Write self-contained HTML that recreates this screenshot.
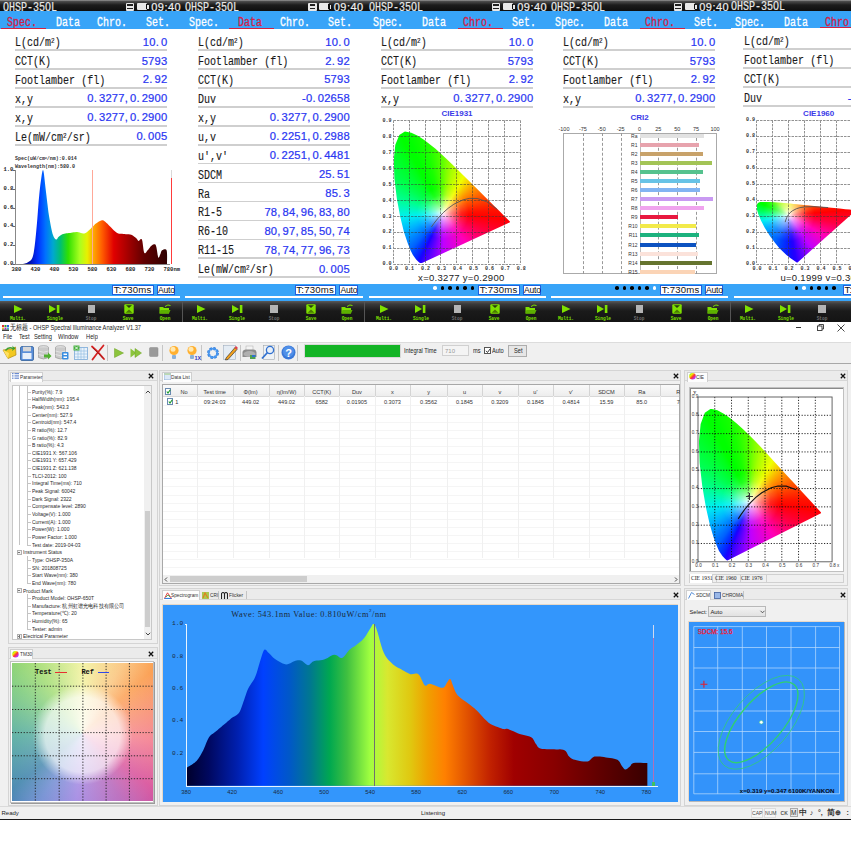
<!DOCTYPE html><html><head><meta charset="utf-8"><style>
*{margin:0;padding:0}
html,body{width:851px;height:851px;overflow:hidden;background:#fff;position:relative}
body>div,body>svg,.a,.t,.lab,.val,.c,.r{position:absolute}
body>div{box-sizing:border-box}
.t{white-space:nowrap;line-height:0}
.c{text-align:center;white-space:nowrap;line-height:0}
.r{text-align:right;white-space:nowrap;line-height:0}
.lab{white-space:nowrap;line-height:0;color:#1a1a1a;font:12px/0 "Liberation Mono",monospace;transform:scaleX(0.835);transform-origin:0 0;letter-spacing:0px;-webkit-text-stroke:0.12px #1a1a1a}
.val{white-space:nowrap;line-height:0;text-align:right;color:#2a36f2;font:11.2px/0 "Liberation Sans",sans-serif;letter-spacing:0.2px;-webkit-text-stroke:0.22px #2a36f2}
.val i{display:inline-block;width:2px}
sup{font-size:60%;vertical-align:baseline;position:relative;top:-0.45em;line-height:0}
</style></head><body><svg width="0" height="0" style="position:absolute"><defs><radialGradient id="wheelw"><stop offset="0" stop-color="#fff"/><stop offset="1" stop-color="#fff" stop-opacity="0"/></radialGradient><linearGradient id="wheel" x1="0" y1="0" x2="1" y2="1"><stop offset="0" stop-color="#30e030"/><stop offset="0.3" stop-color="#f0f000"/><stop offset="0.55" stop-color="#ff3030"/><stop offset="0.8" stop-color="#c030ff"/><stop offset="1" stop-color="#3050ff"/></linearGradient></defs></svg>
<div style="left:0.00px;top:0.00px;width:183.00px;height:11.30px;background:linear-gradient(#9a9a9a 0px,#4a4a4a 1.5px,#1c1c1c 5px,#0e0e0e 11px);"></div>
<div class="t" style="left:2.90px;top:7.60px;color:#e8e8e8;font:12px/0 'Liberation Mono',monospace;transform:scaleX(0.835);transform-origin:0 0;-webkit-text-stroke:0.2px #e8e8e8;">OHSP-35OL</div>
<div style="left:125.50px;top:2.50px;width:8.50px;height:8.50px;background:#e8e8e8;border-radius:1px;"></div>
<div style="left:127.00px;top:4.00px;width:5.50px;height:2.00px;background:#222;"></div>
<div style="left:127.00px;top:8.00px;width:5.50px;height:1.20px;background:#222;"></div>
<div style="left:136.80px;top:3.00px;width:10.20px;height:7.20px;background:#e8e8e8;border-radius:1px;"></div>
<div style="left:145.50px;top:4.20px;width:1.50px;height:4.80px;background:#0a0a0a;"></div>
<div style="left:147.00px;top:4.50px;width:1.50px;height:4.20px;background:#e8e8e8;"></div>
<div class="t" style="left:151.20px;top:6.60px;color:#f0f0f0;font:11px/0 'Liberation Sans',sans-serif;letter-spacing:0.5px;-webkit-text-stroke:0.2px #f0f0f0;">09:40</div>
<div style="left:0.00px;top:11.30px;width:183.00px;height:17.80px;background:#38a4f8;"></div>
<div class="c" style="left:-3.50px;top:23.30px;width:50px;color:#d42045;font:12px/0 'Liberation Mono',monospace;transform:scaleX(0.83);-webkit-text-stroke:0.3px #d42045;">Spec.</div>
<div class="c" style="left:42.90px;top:23.30px;width:50px;color:#ffffff;font:12px/0 'Liberation Mono',monospace;transform:scaleX(0.83);-webkit-text-stroke:0.3px #ffffff;">Data</div>
<div class="c" style="left:87.20px;top:23.30px;width:50px;color:#ffffff;font:12px/0 'Liberation Mono',monospace;transform:scaleX(0.83);-webkit-text-stroke:0.3px #ffffff;">Chro.</div>
<div class="c" style="left:132.80px;top:23.30px;width:50px;color:#ffffff;font:12px/0 'Liberation Mono',monospace;transform:scaleX(0.83);-webkit-text-stroke:0.3px #ffffff;">Set.</div>
<div style="left:0.50px;top:27.50px;width:45.50px;height:2.00px;background:#d42040;"></div>
<div style="left:0.00px;top:29.10px;width:183.00px;height:254.90px;background:#ffffff;"></div>
<div class="lab" style="left:15.30px;top:43.10px;">L(cd/m<sup>2</sup>)</div>
<div class="val" style="left:67.40px;top:41.60px;width:100px;">10.<i></i>0</div>
<div style="left:15.00px;top:49.20px;width:152.00px;height:1.70px;background:#cfcfcf;"></div>
<div class="lab" style="left:15.30px;top:62.03px;">CCT(K)</div>
<div class="val" style="left:67.40px;top:60.53px;width:100px;">5793</div>
<div style="left:15.00px;top:68.13px;width:152.00px;height:1.70px;background:#cfcfcf;"></div>
<div class="lab" style="left:15.30px;top:80.96px;">Footlamber (fl)</div>
<div class="val" style="left:67.40px;top:79.46px;width:100px;">2.<i></i>92</div>
<div style="left:15.00px;top:87.06px;width:152.00px;height:1.70px;background:#cfcfcf;"></div>
<div class="lab" style="left:15.30px;top:99.89px;">x,y</div>
<div class="val" style="left:67.40px;top:98.39px;width:100px;">0.<i></i>3277,<i></i>0.<i></i>2900</div>
<div style="left:15.00px;top:105.99px;width:152.00px;height:1.70px;background:#cfcfcf;"></div>
<div class="lab" style="left:15.30px;top:118.82px;">x,y</div>
<div class="val" style="left:67.40px;top:117.32px;width:100px;">0.<i></i>3277,<i></i>0.<i></i>2900</div>
<div style="left:15.00px;top:124.92px;width:152.00px;height:1.70px;background:#cfcfcf;"></div>
<div class="lab" style="left:15.30px;top:137.75px;">Le(mW/cm<sup>2</sup>/sr)</div>
<div class="val" style="left:67.40px;top:136.25px;width:100px;">0.<i></i>005</div>
<div style="left:15.00px;top:143.85px;width:152.00px;height:1.70px;background:#cfcfcf;"></div>
<div style="left:0.00px;top:284.00px;width:183.00px;height:17.00px;background:#38a4f8;"></div>
<div style="left:2.90px;top:296.20px;width:177.50px;height:2.00px;background:#ffffff;"></div>
<div style="left:0.00px;top:301.00px;width:183.00px;height:21.30px;background:linear-gradient(#5a5a5a 0px,#3a3a3a 3px,#1a1a1a 10px,#141414 21px);"></div>
<div style="left:181.80px;top:301.00px;width:1.20px;height:21.30px;background:#555;"></div>
<div class="t" style="left:15.00px;top:159.20px;font:bold 5px/0 'Liberation Mono',monospace;color:#333;">Spec(uW/cm<sup>2</sup>/nm):0.014</div>
<div class="t" style="left:15.00px;top:166.60px;font:bold 5px/0 'Liberation Mono',monospace;color:#333;">Wavelength(nm):580.0</div>
<div style="left:14.50px;top:170.00px;width:1.00px;height:95.00px;background:#888;"></div>
<div style="left:14.50px;top:264.00px;width:155.00px;height:1.00px;background:#888;"></div>
<svg class="a" style="left:15.30px;top:170.00px;overflow:visible" width="152.00" height="94.00"><defs><linearGradient id="g43" x1="0" y1="0" x2="152.00" y2="0" gradientUnits="userSpaceOnUse"><stop offset="0.0000" stop-color="#000060"/><stop offset="0.1000" stop-color="#0010b0"/><stop offset="0.1500" stop-color="#0030ff"/><stop offset="0.2000" stop-color="#0070ff"/><stop offset="0.2500" stop-color="#00a8d0"/><stop offset="0.3000" stop-color="#00c070"/><stop offset="0.3500" stop-color="#30e000"/><stop offset="0.4250" stop-color="#a8ff20"/><stop offset="0.4750" stop-color="#e8f000"/><stop offset="0.5250" stop-color="#ff9c00"/><stop offset="0.5750" stop-color="#ff5a00"/><stop offset="0.6500" stop-color="#e00000"/><stop offset="0.7500" stop-color="#a00000"/><stop offset="0.8500" stop-color="#600000"/><stop offset="1.0000" stop-color="#300000"/></linearGradient></defs><path d="M0 94.00 L0.00 94.00 L0.90 94.00 L2.17 94.00 L3.66 94.00 L5.22 94.00 L6.71 94.00 L7.98 94.00 L9.03 93.83 L9.99 93.62 L10.88 93.35 L11.71 93.03 L12.51 92.62 L13.30 92.12 L14.08 91.59 L14.85 91.04 L15.58 90.42 L16.27 89.65 L16.91 88.67 L17.48 87.42 L17.97 85.94 L18.38 84.30 L18.74 82.46 L19.07 80.35 L19.40 77.95 L19.76 75.20 L20.14 72.00 L20.53 68.36 L20.92 64.42 L21.31 60.32 L21.68 56.19 L22.04 52.17 L22.38 48.15 L22.70 43.99 L23.01 39.80 L23.32 35.70 L23.63 31.80 L23.94 28.20 L24.25 24.91 L24.56 21.83 L24.87 18.95 L25.18 16.24 L25.50 13.69 L25.84 11.28 L26.20 8.75 L26.57 6.06 L26.96 3.52 L27.35 1.46 L27.74 0.18 L28.12 0.00 L28.50 1.20 L28.89 3.59 L29.28 6.76 L29.67 10.31 L30.04 13.83 L30.40 16.92 L30.74 19.66 L31.06 22.39 L31.37 25.09 L31.68 27.75 L31.99 30.36 L32.30 32.90 L32.60 35.33 L32.88 37.63 L33.16 39.89 L33.45 42.16 L33.80 44.51 L34.20 47.00 L34.68 49.79 L35.23 52.85 L35.81 55.99 L36.42 59.01 L37.03 61.72 L37.62 63.92 L38.20 65.61 L38.79 66.95 L39.38 67.97 L39.96 68.72 L40.51 69.24 L41.04 69.56 L41.51 69.58 L41.91 69.25 L42.30 68.68 L42.70 67.99 L43.16 67.31 L43.70 66.74 L44.32 66.25 L44.99 65.73 L45.72 65.21 L46.50 64.72 L47.35 64.28 L48.26 63.92 L49.26 63.65 L50.36 63.47 L51.51 63.33 L52.71 63.22 L53.91 63.11 L55.10 62.98 L56.29 62.80 L57.49 62.58 L58.71 62.36 L59.93 62.18 L61.13 62.06 L62.32 62.04 L63.50 62.19 L64.70 62.51 L65.88 62.89 L67.03 63.24 L68.13 63.46 L69.16 63.45 L70.11 63.18 L70.99 62.72 L71.82 62.13 L72.61 61.47 L73.36 60.79 L74.10 60.16 L74.81 59.55 L75.48 58.91 L76.12 58.25 L76.73 57.60 L77.32 56.98 L77.90 56.40 L78.42 55.88 L78.86 55.41 L79.28 54.96 L79.73 54.52 L80.27 54.07 L80.94 53.58 L81.80 52.99 L82.81 52.31 L83.91 51.61 L85.02 50.99 L86.08 50.52 L87.02 50.29 L87.83 50.33 L88.55 50.59 L89.23 51.00 L89.88 51.51 L90.53 52.07 L91.20 52.64 L91.87 53.21 L92.49 53.84 L93.12 54.52 L93.79 55.25 L94.53 56.03 L95.38 56.87 L96.37 57.84 L97.49 58.96 L98.68 60.13 L99.90 61.26 L101.09 62.24 L102.22 62.98 L103.26 63.44 L104.23 63.68 L105.19 63.77 L106.16 63.80 L107.19 63.82 L108.30 63.92 L109.55 64.04 L110.92 64.13 L112.34 64.21 L113.75 64.34 L115.08 64.54 L116.28 64.86 L117.36 65.34 L118.38 65.96 L119.32 66.65 L120.18 67.37 L120.94 68.04 L121.60 68.62 L122.10 69.14 L122.43 69.65 L122.67 70.12 L122.88 70.52 L123.13 70.81 L123.50 70.97 L124.00 70.78 L124.57 70.24 L125.19 69.59 L125.81 69.09 L126.40 69.00 L126.92 69.56 L127.35 71.09 L127.72 73.44 L128.06 76.20 L128.40 78.94 L128.77 81.26 L129.20 82.72 L129.70 83.25 L130.24 83.17 L130.81 82.66 L131.41 81.90 L132.01 81.08 L132.62 80.37 L133.24 79.68 L133.87 78.86 L134.52 77.96 L135.17 77.08 L135.80 76.29 L136.42 75.67 L137.03 75.20 L137.66 74.80 L138.27 74.50 L138.85 74.29 L139.38 74.21 L139.84 74.26 L140.20 74.40 L140.47 74.61 L140.69 74.94 L140.90 75.43 L141.11 76.13 L141.36 77.08 L141.65 78.52 L141.97 80.46 L142.29 82.60 L142.61 84.67 L142.94 86.37 L143.26 87.42 L143.58 87.73 L143.89 87.51 L144.21 86.92 L144.53 86.13 L144.84 85.30 L145.16 84.60 L145.45 83.93 L145.69 83.14 L145.94 82.31 L146.23 81.52 L146.59 80.85 L147.06 80.37 L147.71 79.97 L148.54 79.55 L149.44 79.25 L150.31 79.20 L151.07 79.53 L151.62 80.37 L151.93 82.01 L152.07 84.41 L152.10 87.19 L152.06 89.96 L152.01 92.36 L152.00 94.00 L152.00 94.00Z" fill="url(#g43)"/></svg>
<div style="left:91.50px;top:170.00px;width:1.00px;height:94.00px;background:#ffa898;"></div>
<div style="left:170.50px;top:177.50px;width:1.20px;height:86.50px;background:#ff3b3b;"></div>
<div style="left:170.50px;top:170.00px;width:1.20px;height:7.50px;background:#d8d8d8;"></div>
<div class="t" style="left:3.50px;top:170.00px;font:bold 5.5px/0 'Liberation Mono',monospace;color:#222;">1.0</div>
<div style="left:12.80px;top:170.00px;width:2.00px;height:0.80px;background:#666;"></div>
<div class="t" style="left:3.50px;top:188.80px;font:bold 5.5px/0 'Liberation Mono',monospace;color:#222;">0.8</div>
<div style="left:12.80px;top:188.80px;width:2.00px;height:0.80px;background:#666;"></div>
<div class="t" style="left:3.50px;top:207.60px;font:bold 5.5px/0 'Liberation Mono',monospace;color:#222;">0.6</div>
<div style="left:12.80px;top:207.60px;width:2.00px;height:0.80px;background:#666;"></div>
<div class="t" style="left:3.50px;top:226.40px;font:bold 5.5px/0 'Liberation Mono',monospace;color:#222;">0.4</div>
<div style="left:12.80px;top:226.40px;width:2.00px;height:0.80px;background:#666;"></div>
<div class="t" style="left:3.50px;top:245.20px;font:bold 5.5px/0 'Liberation Mono',monospace;color:#222;">0.2</div>
<div style="left:12.80px;top:245.20px;width:2.00px;height:0.80px;background:#666;"></div>
<div class="t" style="left:3.50px;top:264.00px;font:bold 5.5px/0 'Liberation Mono',monospace;color:#222;">0.0</div>
<div style="left:12.80px;top:264.00px;width:2.00px;height:0.80px;background:#666;"></div>
<div class="t" style="left:11.50px;top:269.70px;font:bold 5.5px/0 'Liberation Mono',monospace;color:#222;">380</div>
<div class="t" style="left:30.50px;top:269.70px;font:bold 5.5px/0 'Liberation Mono',monospace;color:#222;">430</div>
<div class="t" style="left:49.50px;top:269.70px;font:bold 5.5px/0 'Liberation Mono',monospace;color:#222;">480</div>
<div class="t" style="left:68.50px;top:269.70px;font:bold 5.5px/0 'Liberation Mono',monospace;color:#222;">530</div>
<div class="t" style="left:87.50px;top:269.70px;font:bold 5.5px/0 'Liberation Mono',monospace;color:#222;">580</div>
<div class="t" style="left:106.50px;top:269.70px;font:bold 5.5px/0 'Liberation Mono',monospace;color:#222;">630</div>
<div class="t" style="left:125.50px;top:269.70px;font:bold 5.5px/0 'Liberation Mono',monospace;color:#222;">680</div>
<div class="t" style="left:144.50px;top:269.70px;font:bold 5.5px/0 'Liberation Mono',monospace;color:#222;">730</div>
<div class="t" style="left:163.50px;top:269.70px;font:bold 5.5px/0 'Liberation Mono',monospace;color:#222;">780nm</div>
<div style="left:112.30px;top:285.00px;width:41.50px;height:10.00px;background:#fff;border:1px solid #2060e0;box-sizing:border-box;"></div>
<div class="t" style="left:113.80px;top:290.20px;font:9.6px/0 'Liberation Sans',sans-serif;color:#111;letter-spacing:0.2px;">T:730ms</div>
<div style="left:156.70px;top:285.00px;width:18.50px;height:10.00px;background:#fff;border:1px solid #2060e0;box-sizing:border-box;"></div>
<div class="t" style="left:157.90px;top:290.20px;font:8.6px/0 'Liberation Sans',sans-serif;color:#111;letter-spacing:-0.15px;">Auto</div>
<svg class="a" style="left:14.00px;top:305.00px" width="9" height="8"><path d="M0 0L8.5 4L0 8Z" fill="#7ee000"/></svg>
<svg class="a" style="left:49.40px;top:305.00px" width="11" height="8"><path d="M0 0L7 4L0 8Z" fill="#7ee000"/><rect x="7.8" y="0" width="2.6" height="8" fill="#7ee000"/></svg>
<div style="left:87.50px;top:305.00px;width:7.70px;height:7.60px;background:#b4b4b4;"></div>
<svg class="a" style="left:123.50px;top:303.80px" width="10" height="10"><rect x="0.3" y="0.3" width="9.4" height="9.4" rx="1" fill="#7ee000"/><path d="M2 1.2L5 4L8 1.2Z" fill="#2a3a10"/><path d="M1.5 8.8L5 5.5L8.5 8.8Z" fill="#4a7a00"/></svg>
<svg class="a" style="left:158.50px;top:303.50px" width="12" height="10"><path d="M0.5 3L4 3L5 4L10 4L10 9.5L0.5 9.5Z" fill="#7ee000"/><path d="M1.5 6L11.5 6L10 9.5L0.5 9.5Z" fill="#5cb000"/><path d="M6 2.5Q9 0 11.5 1.5" stroke="#7ee000" fill="none" stroke-width="1"/></svg>
<div class="c" style="left:-2.40px;top:319.20px;width:40px;color:#7ee000;font:bold 5.6px/0 'Liberation Mono',monospace;transform:scaleX(0.8);">Multi.</div>
<div class="c" style="left:34.80px;top:319.20px;width:40px;color:#7ee000;font:bold 5.6px/0 'Liberation Mono',monospace;transform:scaleX(0.8);">Single</div>
<div class="c" style="left:71.30px;top:319.20px;width:40px;color:#707070;font:bold 5.6px/0 'Liberation Mono',monospace;transform:scaleX(0.8);">Stop</div>
<div class="c" style="left:108.30px;top:319.20px;width:40px;color:#7ee000;font:bold 5.6px/0 'Liberation Mono',monospace;transform:scaleX(0.8);">Save</div>
<div class="c" style="left:144.50px;top:319.20px;width:40px;color:#7ee000;font:bold 5.6px/0 'Liberation Mono',monospace;transform:scaleX(0.8);">Open</div>
<div style="left:182.50px;top:0.00px;width:183.00px;height:11.30px;background:linear-gradient(#9a9a9a 0px,#4a4a4a 1.5px,#1c1c1c 5px,#0e0e0e 11px);"></div>
<div class="t" style="left:185.40px;top:7.60px;color:#e8e8e8;font:12px/0 'Liberation Mono',monospace;transform:scaleX(0.835);transform-origin:0 0;-webkit-text-stroke:0.2px #e8e8e8;">OHSP-35OL</div>
<div style="left:308.00px;top:2.50px;width:8.50px;height:8.50px;background:#e8e8e8;border-radius:1px;"></div>
<div style="left:309.50px;top:4.00px;width:5.50px;height:2.00px;background:#222;"></div>
<div style="left:309.50px;top:8.00px;width:5.50px;height:1.20px;background:#222;"></div>
<div style="left:319.30px;top:3.00px;width:10.20px;height:7.20px;background:#e8e8e8;border-radius:1px;"></div>
<div style="left:328.00px;top:4.20px;width:1.50px;height:4.80px;background:#0a0a0a;"></div>
<div style="left:329.50px;top:4.50px;width:1.50px;height:4.20px;background:#e8e8e8;"></div>
<div class="t" style="left:333.70px;top:6.60px;color:#f0f0f0;font:11px/0 'Liberation Sans',sans-serif;letter-spacing:0.5px;-webkit-text-stroke:0.2px #f0f0f0;">09:40</div>
<div style="left:182.50px;top:11.30px;width:183.00px;height:17.80px;background:#38a4f8;"></div>
<div class="c" style="left:179.00px;top:23.30px;width:50px;color:#ffffff;font:12px/0 'Liberation Mono',monospace;transform:scaleX(0.83);-webkit-text-stroke:0.3px #ffffff;">Spec.</div>
<div class="c" style="left:225.40px;top:23.30px;width:50px;color:#d42045;font:12px/0 'Liberation Mono',monospace;transform:scaleX(0.83);-webkit-text-stroke:0.3px #d42045;">Data</div>
<div class="c" style="left:269.70px;top:23.30px;width:50px;color:#ffffff;font:12px/0 'Liberation Mono',monospace;transform:scaleX(0.83);-webkit-text-stroke:0.3px #ffffff;">Chro.</div>
<div class="c" style="left:315.30px;top:23.30px;width:50px;color:#ffffff;font:12px/0 'Liberation Mono',monospace;transform:scaleX(0.83);-webkit-text-stroke:0.3px #ffffff;">Set.</div>
<div style="left:228.50px;top:27.50px;width:45.50px;height:2.00px;background:#d42040;"></div>
<div style="left:182.50px;top:29.10px;width:183.00px;height:254.90px;background:#ffffff;"></div>
<div class="lab" style="left:197.80px;top:43.10px;">L(cd/m<sup>2</sup>)</div>
<div class="val" style="left:249.90px;top:41.60px;width:100px;">10.<i></i>0</div>
<div style="left:197.50px;top:49.20px;width:152.00px;height:1.70px;background:#cfcfcf;"></div>
<div class="lab" style="left:197.80px;top:62.03px;">Footlamber (fl)</div>
<div class="val" style="left:249.90px;top:60.53px;width:100px;">2.<i></i>92</div>
<div style="left:197.50px;top:68.13px;width:152.00px;height:1.70px;background:#cfcfcf;"></div>
<div class="lab" style="left:197.80px;top:80.96px;">CCT(K)</div>
<div class="val" style="left:249.90px;top:79.46px;width:100px;">5793</div>
<div style="left:197.50px;top:87.06px;width:152.00px;height:1.70px;background:#cfcfcf;"></div>
<div class="lab" style="left:197.80px;top:99.89px;">Duv</div>
<div class="val" style="left:249.90px;top:98.39px;width:100px;">-0.<i></i>02658</div>
<div style="left:197.50px;top:105.99px;width:152.00px;height:1.70px;background:#cfcfcf;"></div>
<div class="lab" style="left:197.80px;top:118.82px;">x,y</div>
<div class="val" style="left:249.90px;top:117.32px;width:100px;">0.<i></i>3277,<i></i>0.<i></i>2900</div>
<div style="left:197.50px;top:124.92px;width:152.00px;height:1.70px;background:#cfcfcf;"></div>
<div class="lab" style="left:197.80px;top:137.75px;">u,v</div>
<div class="val" style="left:249.90px;top:136.25px;width:100px;">0.<i></i>2251,<i></i>0.<i></i>2988</div>
<div style="left:197.50px;top:143.85px;width:152.00px;height:1.70px;background:#cfcfcf;"></div>
<div class="lab" style="left:197.80px;top:156.68px;">u',v'</div>
<div class="val" style="left:249.90px;top:155.18px;width:100px;">0.<i></i>2251,<i></i>0.<i></i>4481</div>
<div style="left:197.50px;top:162.78px;width:152.00px;height:1.70px;background:#cfcfcf;"></div>
<div class="lab" style="left:197.80px;top:175.61px;">SDCM</div>
<div class="val" style="left:249.90px;top:174.11px;width:100px;">25.<i></i>51</div>
<div style="left:197.50px;top:181.71px;width:152.00px;height:1.70px;background:#cfcfcf;"></div>
<div class="lab" style="left:197.80px;top:194.54px;">Ra</div>
<div class="val" style="left:249.90px;top:193.04px;width:100px;">85.<i></i>3</div>
<div style="left:197.50px;top:200.64px;width:152.00px;height:1.70px;background:#cfcfcf;"></div>
<div class="lab" style="left:197.80px;top:213.47px;">R1-5</div>
<div class="val" style="left:249.90px;top:211.97px;width:100px;">78,<i></i>84,<i></i>96,<i></i>83,<i></i>80</div>
<div style="left:197.50px;top:219.57px;width:152.00px;height:1.70px;background:#cfcfcf;"></div>
<div class="lab" style="left:197.80px;top:232.40px;">R6-10</div>
<div class="val" style="left:249.90px;top:230.90px;width:100px;">80,<i></i>97,<i></i>85,<i></i>50,<i></i>74</div>
<div style="left:197.50px;top:238.50px;width:152.00px;height:1.70px;background:#cfcfcf;"></div>
<div class="lab" style="left:197.80px;top:251.33px;">R11-15</div>
<div class="val" style="left:249.90px;top:249.83px;width:100px;">78,<i></i>74,<i></i>77,<i></i>96,<i></i>73</div>
<div style="left:197.50px;top:257.43px;width:152.00px;height:1.70px;background:#cfcfcf;"></div>
<div class="lab" style="left:197.80px;top:270.26px;">Le(mW/cm<sup>2</sup>/sr)</div>
<div class="val" style="left:249.90px;top:268.76px;width:100px;">0.<i></i>005</div>
<div style="left:197.50px;top:276.36px;width:152.00px;height:1.70px;background:#cfcfcf;"></div>
<div style="left:182.50px;top:284.00px;width:183.00px;height:17.00px;background:#38a4f8;"></div>
<div style="left:185.40px;top:296.20px;width:177.50px;height:2.00px;background:#ffffff;"></div>
<div style="left:182.50px;top:301.00px;width:183.00px;height:21.30px;background:linear-gradient(#5a5a5a 0px,#3a3a3a 3px,#1a1a1a 10px,#141414 21px);"></div>
<div style="left:364.30px;top:301.00px;width:1.20px;height:21.30px;background:#555;"></div>
<div style="left:294.80px;top:285.00px;width:41.50px;height:10.00px;background:#fff;border:1px solid #2060e0;box-sizing:border-box;"></div>
<div class="t" style="left:296.30px;top:290.20px;font:9.6px/0 'Liberation Sans',sans-serif;color:#111;letter-spacing:0.2px;">T:730ms</div>
<div style="left:339.20px;top:285.00px;width:18.50px;height:10.00px;background:#fff;border:1px solid #2060e0;box-sizing:border-box;"></div>
<div class="t" style="left:340.40px;top:290.20px;font:8.6px/0 'Liberation Sans',sans-serif;color:#111;letter-spacing:-0.15px;">Auto</div>
<svg class="a" style="left:196.50px;top:305.00px" width="9" height="8"><path d="M0 0L8.5 4L0 8Z" fill="#7ee000"/></svg>
<svg class="a" style="left:231.90px;top:305.00px" width="11" height="8"><path d="M0 0L7 4L0 8Z" fill="#7ee000"/><rect x="7.8" y="0" width="2.6" height="8" fill="#7ee000"/></svg>
<div style="left:270.00px;top:305.00px;width:7.70px;height:7.60px;background:#b4b4b4;"></div>
<svg class="a" style="left:306.00px;top:303.80px" width="10" height="10"><rect x="0.3" y="0.3" width="9.4" height="9.4" rx="1" fill="#7ee000"/><path d="M2 1.2L5 4L8 1.2Z" fill="#2a3a10"/><path d="M1.5 8.8L5 5.5L8.5 8.8Z" fill="#4a7a00"/></svg>
<svg class="a" style="left:341.00px;top:303.50px" width="12" height="10"><path d="M0.5 3L4 3L5 4L10 4L10 9.5L0.5 9.5Z" fill="#7ee000"/><path d="M1.5 6L11.5 6L10 9.5L0.5 9.5Z" fill="#5cb000"/><path d="M6 2.5Q9 0 11.5 1.5" stroke="#7ee000" fill="none" stroke-width="1"/></svg>
<div class="c" style="left:180.10px;top:319.20px;width:40px;color:#7ee000;font:bold 5.6px/0 'Liberation Mono',monospace;transform:scaleX(0.8);">Multi.</div>
<div class="c" style="left:217.30px;top:319.20px;width:40px;color:#7ee000;font:bold 5.6px/0 'Liberation Mono',monospace;transform:scaleX(0.8);">Single</div>
<div class="c" style="left:253.80px;top:319.20px;width:40px;color:#707070;font:bold 5.6px/0 'Liberation Mono',monospace;transform:scaleX(0.8);">Stop</div>
<div class="c" style="left:290.80px;top:319.20px;width:40px;color:#7ee000;font:bold 5.6px/0 'Liberation Mono',monospace;transform:scaleX(0.8);">Save</div>
<div class="c" style="left:327.00px;top:319.20px;width:40px;color:#7ee000;font:bold 5.6px/0 'Liberation Mono',monospace;transform:scaleX(0.8);">Open</div>
<div style="left:366.00px;top:0.00px;width:183.00px;height:11.30px;background:linear-gradient(#9a9a9a 0px,#4a4a4a 1.5px,#1c1c1c 5px,#0e0e0e 11px);"></div>
<div class="t" style="left:368.90px;top:7.60px;color:#e8e8e8;font:12px/0 'Liberation Mono',monospace;transform:scaleX(0.835);transform-origin:0 0;-webkit-text-stroke:0.2px #e8e8e8;">OHSP-35OL</div>
<div style="left:491.50px;top:2.50px;width:8.50px;height:8.50px;background:#e8e8e8;border-radius:1px;"></div>
<div style="left:493.00px;top:4.00px;width:5.50px;height:2.00px;background:#222;"></div>
<div style="left:493.00px;top:8.00px;width:5.50px;height:1.20px;background:#222;"></div>
<div style="left:502.80px;top:3.00px;width:10.20px;height:7.20px;background:#e8e8e8;border-radius:1px;"></div>
<div style="left:511.50px;top:4.20px;width:1.50px;height:4.80px;background:#0a0a0a;"></div>
<div style="left:513.00px;top:4.50px;width:1.50px;height:4.20px;background:#e8e8e8;"></div>
<div class="t" style="left:517.20px;top:6.60px;color:#f0f0f0;font:11px/0 'Liberation Sans',sans-serif;letter-spacing:0.5px;-webkit-text-stroke:0.2px #f0f0f0;">09:40</div>
<div style="left:366.00px;top:11.30px;width:183.00px;height:17.80px;background:#38a4f8;"></div>
<div class="c" style="left:362.50px;top:23.30px;width:50px;color:#ffffff;font:12px/0 'Liberation Mono',monospace;transform:scaleX(0.83);-webkit-text-stroke:0.3px #ffffff;">Spec.</div>
<div class="c" style="left:408.90px;top:23.30px;width:50px;color:#ffffff;font:12px/0 'Liberation Mono',monospace;transform:scaleX(0.83);-webkit-text-stroke:0.3px #ffffff;">Data</div>
<div class="c" style="left:453.20px;top:23.30px;width:50px;color:#d42045;font:12px/0 'Liberation Mono',monospace;transform:scaleX(0.83);-webkit-text-stroke:0.3px #d42045;">Chro.</div>
<div class="c" style="left:498.80px;top:23.30px;width:50px;color:#ffffff;font:12px/0 'Liberation Mono',monospace;transform:scaleX(0.83);-webkit-text-stroke:0.3px #ffffff;">Set.</div>
<div style="left:457.50px;top:27.50px;width:45.50px;height:2.00px;background:#d42040;"></div>
<div style="left:366.00px;top:29.10px;width:183.00px;height:254.90px;background:#ffffff;"></div>
<div class="lab" style="left:381.30px;top:43.10px;">L(cd/m<sup>2</sup>)</div>
<div class="val" style="left:433.40px;top:41.60px;width:100px;">10.<i></i>0</div>
<div style="left:381.00px;top:49.20px;width:152.00px;height:1.70px;background:#cfcfcf;"></div>
<div class="lab" style="left:381.30px;top:62.03px;">CCT(K)</div>
<div class="val" style="left:433.40px;top:60.53px;width:100px;">5793</div>
<div style="left:381.00px;top:68.13px;width:152.00px;height:1.70px;background:#cfcfcf;"></div>
<div class="lab" style="left:381.30px;top:80.96px;">Footlamber (fl)</div>
<div class="val" style="left:433.40px;top:79.46px;width:100px;">2.<i></i>92</div>
<div style="left:381.00px;top:87.06px;width:152.00px;height:1.70px;background:#cfcfcf;"></div>
<div class="lab" style="left:381.30px;top:99.89px;">x,y</div>
<div class="val" style="left:433.40px;top:98.39px;width:100px;">0.<i></i>3277,<i></i>0.<i></i>2900</div>
<div style="left:381.00px;top:105.99px;width:152.00px;height:1.70px;background:#cfcfcf;"></div>
<div style="left:366.00px;top:284.00px;width:183.00px;height:17.00px;background:#38a4f8;"></div>
<div style="left:368.90px;top:296.20px;width:177.50px;height:2.00px;background:#ffffff;"></div>
<div style="left:366.00px;top:301.00px;width:183.00px;height:21.30px;background:linear-gradient(#5a5a5a 0px,#3a3a3a 3px,#1a1a1a 10px,#141414 21px);"></div>
<div style="left:547.80px;top:301.00px;width:1.20px;height:21.30px;background:#555;"></div>
<div class="c" style="left:417.00px;top:114.00px;width:80px;color:#3a3ae8;font:bold 8px/0 'Liberation Sans',sans-serif;">CIE1931</div>
<div style="left:393.10px;top:120.90px;width:127.70px;height:143.40px;background:#fff;"></div>
<div style="left:393.72px;top:131.45px;width:116.65px;height:132.06px;background:radial-gradient(circle at 48.9px 81.9px, rgba(255,255,255,0.97) 0px, rgba(255,255,255,0.55) 7.8px, rgba(255,255,255,0.12) 18.2px, rgba(255,255,255,0) 26.0px), conic-gradient(from 0deg at 48.9px 81.9px, #58ff00 -1.3deg, #80ff00 4.6deg, #a8ff00 11.7deg, #f0ff00 29.8deg, #ff9800 50.6deg, #ff5000 68.6deg, #ff2800 80.6deg, #ff1000 87.8deg, #ff0800 91.8deg, #ff0400 94.0deg, #ff0000 95.5deg, #ff0000 96.8deg, #ff0008 97.3deg, #ff0040 112.8deg, #ff00b8 142.0deg, #c000ff 179.0deg, #3000ff 203.4deg, #2800ff 203.8deg, #2000ff 205.3deg, #1408ff 206.9deg, #0820ff 209.8deg, #0040ff 215.4deg, #0060ff 220.7deg, #0080ff 229.5deg, #00b0ff 243.7deg, #00f0f0 264.6deg, #00ff90 287.9deg, #00ff50 305.8deg, #00ff30 317.5deg, #00ff18 325.4deg, #00ff00 331.1deg, #00ff00 335.3deg, #08ff00 338.8deg, #10ff00 342.2deg, #18ff00 345.7deg, #28ff00 349.5deg, #3cff00 353.7deg, #58ff00 358.7deg, #80ff00 364.6deg);clip-path:polygon(27.2px 132.1px,26.7px 132.0px,25.6px 131.1px,24.4px 130.0px,22.4px 128.1px,19.2px 123.6px,16.9px 119.0px,14.0px 111.7px,10.3px 100.9px,6.6px 85.8px,3.1px 67.1px,0.7px 47.1px,0.0px 28.5px,1.6px 13.3px,5.6px 3.5px,11.2px 0.0px,17.6px 1.2px,24.1px 4.4px,30.2px 8.3px,36.0px 12.7px,41.8px 17.4px,47.5px 22.5px,53.2px 27.9px,58.9px 33.3px,70.3px 44.5px,81.2px 55.3px,91.2px 65.3px,99.5px 73.5px,105.7px 79.6px,109.8px 83.7px,112.4px 86.3px,114.1px 88.1px,115.9px 89.8px,116.7px 90.6px);"></div>
<svg class="a" style="left:393px;top:120px;overflow:visible" width="129" height="145"><g stroke="#3a3a3a" stroke-width="1" stroke-dasharray="2.5 1" opacity="0.55"><line x1="0.50" y1="0.50" x2="0.50" y2="144.50"/><line x1="16.50" y1="0.50" x2="16.50" y2="144.50"/><line x1="32.50" y1="0.50" x2="32.50" y2="144.50"/><line x1="47.50" y1="0.50" x2="47.50" y2="144.50"/><line x1="63.50" y1="0.50" x2="63.50" y2="144.50"/><line x1="79.50" y1="0.50" x2="79.50" y2="144.50"/><line x1="95.50" y1="0.50" x2="95.50" y2="144.50"/><line x1="111.50" y1="0.50" x2="111.50" y2="144.50"/><line x1="127.50" y1="0.50" x2="127.50" y2="144.50"/><line x1="0.50" y1="144.50" x2="127.50" y2="144.50"/><line x1="0.50" y1="128.50" x2="127.50" y2="128.50"/><line x1="0.50" y1="112.50" x2="127.50" y2="112.50"/><line x1="0.50" y1="96.50" x2="127.50" y2="96.50"/><line x1="0.50" y1="80.50" x2="127.50" y2="80.50"/><line x1="0.50" y1="64.50" x2="127.50" y2="64.50"/><line x1="0.50" y1="48.50" x2="127.50" y2="48.50"/><line x1="0.50" y1="32.50" x2="127.50" y2="32.50"/><line x1="0.50" y1="16.50" x2="127.50" y2="16.50"/><line x1="0.50" y1="0.50" x2="127.50" y2="0.50"/></g><path d="M104.30 89.43 L93.59 81.67 L84.17 78.45 L76.24 78.38 L69.84 79.91 L60.84 84.26 L55.19 88.28 L50.14 92.72 L44.91 98.35 L41.04 103.24 L38.39 106.98" stroke="#555" stroke-width="0.9" fill="none"/></svg>
<div class="t" style="left:382.60px;top:264.30px;font:bold 5px/0 'Liberation Mono',monospace;color:#333;">0.0</div>
<div class="t" style="left:382.60px;top:248.37px;font:bold 5px/0 'Liberation Mono',monospace;color:#333;">0.1</div>
<div class="t" style="left:382.60px;top:232.43px;font:bold 5px/0 'Liberation Mono',monospace;color:#333;">0.2</div>
<div class="t" style="left:382.60px;top:216.50px;font:bold 5px/0 'Liberation Mono',monospace;color:#333;">0.3</div>
<div class="t" style="left:382.60px;top:200.57px;font:bold 5px/0 'Liberation Mono',monospace;color:#333;">0.4</div>
<div class="t" style="left:382.60px;top:184.63px;font:bold 5px/0 'Liberation Mono',monospace;color:#333;">0.5</div>
<div class="t" style="left:382.60px;top:168.70px;font:bold 5px/0 'Liberation Mono',monospace;color:#333;">0.6</div>
<div class="t" style="left:382.60px;top:152.77px;font:bold 5px/0 'Liberation Mono',monospace;color:#333;">0.7</div>
<div class="t" style="left:382.60px;top:136.83px;font:bold 5px/0 'Liberation Mono',monospace;color:#333;">0.8</div>
<div class="t" style="left:382.60px;top:120.90px;font:bold 5px/0 'Liberation Mono',monospace;color:#333;">0.9</div>
<div class="t" style="left:389.10px;top:268.80px;font:bold 5px/0 'Liberation Mono',monospace;color:#333;">0.0</div>
<div class="t" style="left:405.06px;top:268.80px;font:bold 5px/0 'Liberation Mono',monospace;color:#333;">0.1</div>
<div class="t" style="left:421.02px;top:268.80px;font:bold 5px/0 'Liberation Mono',monospace;color:#333;">0.2</div>
<div class="t" style="left:436.99px;top:268.80px;font:bold 5px/0 'Liberation Mono',monospace;color:#333;">0.3</div>
<div class="t" style="left:452.95px;top:268.80px;font:bold 5px/0 'Liberation Mono',monospace;color:#333;">0.4</div>
<div class="t" style="left:468.91px;top:268.80px;font:bold 5px/0 'Liberation Mono',monospace;color:#333;">0.5</div>
<div class="t" style="left:484.88px;top:268.80px;font:bold 5px/0 'Liberation Mono',monospace;color:#333;">0.6</div>
<div class="t" style="left:500.84px;top:268.80px;font:bold 5px/0 'Liberation Mono',monospace;color:#333;">0.7</div>
<div class="t" style="left:516.80px;top:268.80px;font:bold 5px/0 'Liberation Mono',monospace;color:#333;">0.8</div>
<div class="t" style="left:418.10px;top:277.50px;font:9.5px/0 'Liberation Sans',sans-serif;color:#222;letter-spacing:0.3px;">x=0.3277 y=0.2900</div>
<div style="left:478.30px;top:285.00px;width:41.50px;height:10.00px;background:#fff;border:1px solid #2060e0;box-sizing:border-box;"></div>
<div class="t" style="left:479.80px;top:290.20px;font:9.6px/0 'Liberation Sans',sans-serif;color:#111;letter-spacing:0.2px;">T:730ms</div>
<div style="left:522.70px;top:285.00px;width:18.50px;height:10.00px;background:#fff;border:1px solid #2060e0;box-sizing:border-box;"></div>
<div class="t" style="left:523.90px;top:290.20px;font:8.6px/0 'Liberation Sans',sans-serif;color:#111;letter-spacing:-0.15px;">Auto</div>
<div style="left:433.20px;top:286.30px;width:3.60px;height:3.60px;background:#ffffff;border-radius:50%;"></div>
<div style="left:440.70px;top:286.30px;width:3.60px;height:3.60px;background:#000000;border-radius:50%;"></div>
<div style="left:448.20px;top:286.30px;width:3.60px;height:3.60px;background:#000000;border-radius:50%;"></div>
<div style="left:455.70px;top:286.30px;width:3.60px;height:3.60px;background:#000000;border-radius:50%;"></div>
<div style="left:463.20px;top:286.30px;width:3.60px;height:3.60px;background:#000000;border-radius:50%;"></div>
<div style="left:470.70px;top:286.30px;width:3.60px;height:3.60px;background:#000000;border-radius:50%;"></div>
<svg class="a" style="left:380.00px;top:305.00px" width="9" height="8"><path d="M0 0L8.5 4L0 8Z" fill="#7ee000"/></svg>
<svg class="a" style="left:415.40px;top:305.00px" width="11" height="8"><path d="M0 0L7 4L0 8Z" fill="#7ee000"/><rect x="7.8" y="0" width="2.6" height="8" fill="#7ee000"/></svg>
<div style="left:453.50px;top:305.00px;width:7.70px;height:7.60px;background:#b4b4b4;"></div>
<svg class="a" style="left:489.50px;top:303.80px" width="10" height="10"><rect x="0.3" y="0.3" width="9.4" height="9.4" rx="1" fill="#7ee000"/><path d="M2 1.2L5 4L8 1.2Z" fill="#2a3a10"/><path d="M1.5 8.8L5 5.5L8.5 8.8Z" fill="#4a7a00"/></svg>
<svg class="a" style="left:524.50px;top:303.50px" width="12" height="10"><path d="M0.5 3L4 3L5 4L10 4L10 9.5L0.5 9.5Z" fill="#7ee000"/><path d="M1.5 6L11.5 6L10 9.5L0.5 9.5Z" fill="#5cb000"/><path d="M6 2.5Q9 0 11.5 1.5" stroke="#7ee000" fill="none" stroke-width="1"/></svg>
<div class="c" style="left:363.60px;top:319.20px;width:40px;color:#7ee000;font:bold 5.6px/0 'Liberation Mono',monospace;transform:scaleX(0.8);">Multi.</div>
<div class="c" style="left:400.80px;top:319.20px;width:40px;color:#7ee000;font:bold 5.6px/0 'Liberation Mono',monospace;transform:scaleX(0.8);">Single</div>
<div class="c" style="left:437.30px;top:319.20px;width:40px;color:#707070;font:bold 5.6px/0 'Liberation Mono',monospace;transform:scaleX(0.8);">Stop</div>
<div class="c" style="left:474.30px;top:319.20px;width:40px;color:#7ee000;font:bold 5.6px/0 'Liberation Mono',monospace;transform:scaleX(0.8);">Save</div>
<div class="c" style="left:510.50px;top:319.20px;width:40px;color:#7ee000;font:bold 5.6px/0 'Liberation Mono',monospace;transform:scaleX(0.8);">Open</div>
<div style="left:548.00px;top:0.00px;width:183.00px;height:11.30px;background:linear-gradient(#9a9a9a 0px,#4a4a4a 1.5px,#1c1c1c 5px,#0e0e0e 11px);"></div>
<div class="t" style="left:550.90px;top:7.60px;color:#e8e8e8;font:12px/0 'Liberation Mono',monospace;transform:scaleX(0.835);transform-origin:0 0;-webkit-text-stroke:0.2px #e8e8e8;">OHSP-35OL</div>
<div style="left:673.50px;top:2.50px;width:8.50px;height:8.50px;background:#e8e8e8;border-radius:1px;"></div>
<div style="left:675.00px;top:4.00px;width:5.50px;height:2.00px;background:#222;"></div>
<div style="left:675.00px;top:8.00px;width:5.50px;height:1.20px;background:#222;"></div>
<div style="left:684.80px;top:3.00px;width:10.20px;height:7.20px;background:#e8e8e8;border-radius:1px;"></div>
<div style="left:693.50px;top:4.20px;width:1.50px;height:4.80px;background:#0a0a0a;"></div>
<div style="left:695.00px;top:4.50px;width:1.50px;height:4.20px;background:#e8e8e8;"></div>
<div class="t" style="left:699.20px;top:6.60px;color:#f0f0f0;font:11px/0 'Liberation Sans',sans-serif;letter-spacing:0.5px;-webkit-text-stroke:0.2px #f0f0f0;">09:40</div>
<div style="left:548.00px;top:11.30px;width:183.00px;height:17.80px;background:#38a4f8;"></div>
<div class="c" style="left:544.50px;top:23.30px;width:50px;color:#ffffff;font:12px/0 'Liberation Mono',monospace;transform:scaleX(0.83);-webkit-text-stroke:0.3px #ffffff;">Spec.</div>
<div class="c" style="left:590.90px;top:23.30px;width:50px;color:#ffffff;font:12px/0 'Liberation Mono',monospace;transform:scaleX(0.83);-webkit-text-stroke:0.3px #ffffff;">Data</div>
<div class="c" style="left:635.20px;top:23.30px;width:50px;color:#d42045;font:12px/0 'Liberation Mono',monospace;transform:scaleX(0.83);-webkit-text-stroke:0.3px #d42045;">Chro.</div>
<div class="c" style="left:680.80px;top:23.30px;width:50px;color:#ffffff;font:12px/0 'Liberation Mono',monospace;transform:scaleX(0.83);-webkit-text-stroke:0.3px #ffffff;">Set.</div>
<div style="left:639.50px;top:27.50px;width:45.50px;height:2.00px;background:#d42040;"></div>
<div style="left:548.00px;top:29.10px;width:183.00px;height:254.90px;background:#ffffff;"></div>
<div class="lab" style="left:563.30px;top:43.10px;">L(cd/m<sup>2</sup>)</div>
<div class="val" style="left:615.40px;top:41.60px;width:100px;">10.<i></i>0</div>
<div style="left:563.00px;top:49.20px;width:152.00px;height:1.70px;background:#cfcfcf;"></div>
<div class="lab" style="left:563.30px;top:62.03px;">CCT(K)</div>
<div class="val" style="left:615.40px;top:60.53px;width:100px;">5793</div>
<div style="left:563.00px;top:68.13px;width:152.00px;height:1.70px;background:#cfcfcf;"></div>
<div class="lab" style="left:563.30px;top:80.96px;">Footlamber (fl)</div>
<div class="val" style="left:615.40px;top:79.46px;width:100px;">2.<i></i>92</div>
<div style="left:563.00px;top:87.06px;width:152.00px;height:1.70px;background:#cfcfcf;"></div>
<div class="lab" style="left:563.30px;top:99.89px;">x,y</div>
<div class="val" style="left:615.40px;top:98.39px;width:100px;">0.<i></i>3277,<i></i>0.<i></i>2900</div>
<div style="left:563.00px;top:105.99px;width:152.00px;height:1.70px;background:#cfcfcf;"></div>
<div style="left:548.00px;top:284.00px;width:183.00px;height:17.00px;background:#38a4f8;"></div>
<div style="left:550.90px;top:296.20px;width:177.50px;height:2.00px;background:#ffffff;"></div>
<div style="left:548.00px;top:301.00px;width:183.00px;height:21.30px;background:linear-gradient(#5a5a5a 0px,#3a3a3a 3px,#1a1a1a 10px,#141414 21px);"></div>
<div style="left:729.80px;top:301.00px;width:1.20px;height:21.30px;background:#555;"></div>
<div class="c" style="left:609.50px;top:118.30px;width:60px;color:#3a3ae8;font:bold 8px/0 'Liberation Sans',sans-serif;">CRI2</div>
<div style="left:562.80px;top:132.80px;width:153.80px;height:141.40px;border:1px solid #aaa;background:#fff;box-sizing:border-box;"></div>
<div class="a" style="left:582.88px;top:132.80px;width:0;height:141.40px;border-left:1px dashed #999;"></div>
<div class="a" style="left:601.75px;top:132.80px;width:0;height:141.40px;border-left:1px dashed #999;"></div>
<div class="a" style="left:620.62px;top:132.80px;width:0;height:141.40px;border-left:1px dashed #999;"></div>
<div class="a" style="left:658.38px;top:132.80px;width:0;height:141.40px;border-left:1px dashed #999;"></div>
<div class="a" style="left:677.25px;top:132.80px;width:0;height:141.40px;border-left:1px dashed #999;"></div>
<div class="a" style="left:696.12px;top:132.80px;width:0;height:141.40px;border-left:1px dashed #999;"></div>
<div style="left:639.50px;top:132.80px;width:1.00px;height:141.40px;background:#bbb;"></div>
<div class="c" style="left:554.00px;top:129.4px;width:20px;font:5.5px/0 'Liberation Sans',sans-serif;color:#333;">-100</div>
<div class="c" style="left:572.88px;top:129.4px;width:20px;font:5.5px/0 'Liberation Sans',sans-serif;color:#333;">-75</div>
<div class="c" style="left:591.75px;top:129.4px;width:20px;font:5.5px/0 'Liberation Sans',sans-serif;color:#333;">-50</div>
<div class="c" style="left:610.62px;top:129.4px;width:20px;font:5.5px/0 'Liberation Sans',sans-serif;color:#333;">-25</div>
<div class="c" style="left:629.50px;top:129.4px;width:20px;font:5.5px/0 'Liberation Sans',sans-serif;color:#333;">0</div>
<div class="c" style="left:648.38px;top:129.4px;width:20px;font:5.5px/0 'Liberation Sans',sans-serif;color:#333;">25</div>
<div class="c" style="left:667.25px;top:129.4px;width:20px;font:5.5px/0 'Liberation Sans',sans-serif;color:#333;">50</div>
<div class="c" style="left:686.12px;top:129.4px;width:20px;font:5.5px/0 'Liberation Sans',sans-serif;color:#333;">75</div>
<div class="c" style="left:705.00px;top:129.4px;width:20px;font:5.5px/0 'Liberation Sans',sans-serif;color:#333;">100</div>
<div style="left:640.00px;top:133.90px;width:64.17px;height:4.00px;background:#e2e2e2;"></div>
<div class="r" style="left:617.50px;top:135.90px;width:20px;font:5px/0 'Liberation Sans',sans-serif;color:#333;">Ra</div>
<div style="left:640.00px;top:142.95px;width:58.89px;height:4.00px;background:#e7a3ad;"></div>
<div class="r" style="left:617.50px;top:144.95px;width:20px;font:5px/0 'Liberation Sans',sans-serif;color:#333;">R1</div>
<div style="left:640.00px;top:152.00px;width:63.42px;height:4.00px;background:#c8a26a;"></div>
<div class="r" style="left:617.50px;top:154.00px;width:20px;font:5px/0 'Liberation Sans',sans-serif;color:#333;">R2</div>
<div style="left:640.00px;top:161.05px;width:72.48px;height:4.00px;background:#a3c456;"></div>
<div class="r" style="left:617.50px;top:163.05px;width:20px;font:5px/0 'Liberation Sans',sans-serif;color:#333;">R3</div>
<div style="left:640.00px;top:170.10px;width:62.66px;height:4.00px;background:#55c28e;"></div>
<div class="r" style="left:617.50px;top:172.10px;width:20px;font:5px/0 'Liberation Sans',sans-serif;color:#333;">R4</div>
<div style="left:640.00px;top:179.15px;width:60.40px;height:4.00px;background:#68c3e6;"></div>
<div class="r" style="left:617.50px;top:181.15px;width:20px;font:5px/0 'Liberation Sans',sans-serif;color:#333;">R5</div>
<div style="left:640.00px;top:188.20px;width:60.40px;height:4.00px;background:#82b4f2;"></div>
<div class="r" style="left:617.50px;top:190.20px;width:20px;font:5px/0 'Liberation Sans',sans-serif;color:#333;">R6</div>
<div style="left:640.00px;top:197.25px;width:73.23px;height:4.00px;background:#c99af2;"></div>
<div class="r" style="left:617.50px;top:199.25px;width:20px;font:5px/0 'Liberation Sans',sans-serif;color:#333;">R7</div>
<div style="left:640.00px;top:206.30px;width:64.17px;height:4.00px;background:#f0a4ee;"></div>
<div class="r" style="left:617.50px;top:208.30px;width:20px;font:5px/0 'Liberation Sans',sans-serif;color:#333;">R8</div>
<div style="left:640.00px;top:215.35px;width:37.75px;height:4.00px;background:#e8193f;"></div>
<div class="r" style="left:617.50px;top:217.35px;width:20px;font:5px/0 'Liberation Sans',sans-serif;color:#333;">R9</div>
<div style="left:640.00px;top:224.40px;width:55.87px;height:4.00px;background:#f2ea4a;"></div>
<div class="r" style="left:617.50px;top:226.40px;width:20px;font:5px/0 'Liberation Sans',sans-serif;color:#333;">R10</div>
<div style="left:640.00px;top:233.45px;width:58.89px;height:4.00px;background:#1cb27e;"></div>
<div class="r" style="left:617.50px;top:235.45px;width:20px;font:5px/0 'Liberation Sans',sans-serif;color:#333;">R11</div>
<div style="left:640.00px;top:242.50px;width:55.87px;height:4.00px;background:#0c52c0;"></div>
<div class="r" style="left:617.50px;top:244.50px;width:20px;font:5px/0 'Liberation Sans',sans-serif;color:#333;">R12</div>
<div style="left:640.00px;top:251.55px;width:58.13px;height:4.00px;background:#fbe2da;"></div>
<div class="r" style="left:617.50px;top:253.55px;width:20px;font:5px/0 'Liberation Sans',sans-serif;color:#333;">R13</div>
<div style="left:640.00px;top:260.60px;width:72.48px;height:4.00px;background:#65742f;"></div>
<div class="r" style="left:617.50px;top:262.60px;width:20px;font:5px/0 'Liberation Sans',sans-serif;color:#333;">R14</div>
<div style="left:640.00px;top:269.65px;width:55.12px;height:4.00px;background:#fbd4b6;"></div>
<div class="r" style="left:617.50px;top:271.65px;width:20px;font:5px/0 'Liberation Sans',sans-serif;color:#333;">R15</div>
<div style="left:660.30px;top:285.00px;width:41.50px;height:10.00px;background:#fff;border:1px solid #2060e0;box-sizing:border-box;"></div>
<div class="t" style="left:661.80px;top:290.20px;font:9.6px/0 'Liberation Sans',sans-serif;color:#111;letter-spacing:0.2px;">T:730ms</div>
<div style="left:704.70px;top:285.00px;width:18.50px;height:10.00px;background:#fff;border:1px solid #2060e0;box-sizing:border-box;"></div>
<div class="t" style="left:705.90px;top:290.20px;font:8.6px/0 'Liberation Sans',sans-serif;color:#111;letter-spacing:-0.15px;">Auto</div>
<div style="left:615.20px;top:286.30px;width:3.60px;height:3.60px;background:#000000;border-radius:50%;"></div>
<div style="left:622.70px;top:286.30px;width:3.60px;height:3.60px;background:#000000;border-radius:50%;"></div>
<div style="left:630.20px;top:286.30px;width:3.60px;height:3.60px;background:#000000;border-radius:50%;"></div>
<div style="left:637.70px;top:286.30px;width:3.60px;height:3.60px;background:#000000;border-radius:50%;"></div>
<div style="left:645.20px;top:286.30px;width:3.60px;height:3.60px;background:#000000;border-radius:50%;"></div>
<div style="left:652.70px;top:286.30px;width:3.60px;height:3.60px;background:#ffffff;border-radius:50%;"></div>
<svg class="a" style="left:562.00px;top:305.00px" width="9" height="8"><path d="M0 0L8.5 4L0 8Z" fill="#7ee000"/></svg>
<svg class="a" style="left:597.40px;top:305.00px" width="11" height="8"><path d="M0 0L7 4L0 8Z" fill="#7ee000"/><rect x="7.8" y="0" width="2.6" height="8" fill="#7ee000"/></svg>
<div style="left:635.50px;top:305.00px;width:7.70px;height:7.60px;background:#b4b4b4;"></div>
<svg class="a" style="left:671.50px;top:303.80px" width="10" height="10"><rect x="0.3" y="0.3" width="9.4" height="9.4" rx="1" fill="#7ee000"/><path d="M2 1.2L5 4L8 1.2Z" fill="#2a3a10"/><path d="M1.5 8.8L5 5.5L8.5 8.8Z" fill="#4a7a00"/></svg>
<svg class="a" style="left:706.50px;top:303.50px" width="12" height="10"><path d="M0.5 3L4 3L5 4L10 4L10 9.5L0.5 9.5Z" fill="#7ee000"/><path d="M1.5 6L11.5 6L10 9.5L0.5 9.5Z" fill="#5cb000"/><path d="M6 2.5Q9 0 11.5 1.5" stroke="#7ee000" fill="none" stroke-width="1"/></svg>
<div class="c" style="left:545.60px;top:319.20px;width:40px;color:#7ee000;font:bold 5.6px/0 'Liberation Mono',monospace;transform:scaleX(0.8);">Multi.</div>
<div class="c" style="left:582.80px;top:319.20px;width:40px;color:#7ee000;font:bold 5.6px/0 'Liberation Mono',monospace;transform:scaleX(0.8);">Single</div>
<div class="c" style="left:619.30px;top:319.20px;width:40px;color:#707070;font:bold 5.6px/0 'Liberation Mono',monospace;transform:scaleX(0.8);">Stop</div>
<div class="c" style="left:656.30px;top:319.20px;width:40px;color:#7ee000;font:bold 5.6px/0 'Liberation Mono',monospace;transform:scaleX(0.8);">Save</div>
<div class="c" style="left:692.50px;top:319.20px;width:40px;color:#7ee000;font:bold 5.6px/0 'Liberation Mono',monospace;transform:scaleX(0.8);">Open</div>
<div style="left:730.70px;top:0.00px;width:183.00px;height:10.50px;background:linear-gradient(#9a9a9a 0px,#4a4a4a 1.5px,#1c1c1c 5px,#0e0e0e 11px);"></div>
<div class="t" style="left:731.10px;top:7.20px;color:#e8e8e8;font:12px/0 'Liberation Mono',monospace;transform:scaleX(0.835);transform-origin:0 0;-webkit-text-stroke:0.2px #e8e8e8;">OHSP-35OL</div>
<div style="left:856.20px;top:2.10px;width:8.50px;height:8.50px;background:#e8e8e8;border-radius:1px;"></div>
<div style="left:857.70px;top:3.60px;width:5.50px;height:2.00px;background:#222;"></div>
<div style="left:857.70px;top:7.60px;width:5.50px;height:1.20px;background:#222;"></div>
<div style="left:867.50px;top:2.60px;width:10.20px;height:7.20px;background:#e8e8e8;border-radius:1px;"></div>
<div style="left:876.20px;top:3.80px;width:1.50px;height:4.80px;background:#0a0a0a;"></div>
<div style="left:877.70px;top:4.10px;width:1.50px;height:4.20px;background:#e8e8e8;"></div>
<div class="t" style="left:881.90px;top:6.20px;color:#f0f0f0;font:11px/0 'Liberation Sans',sans-serif;letter-spacing:0.5px;-webkit-text-stroke:0.2px #f0f0f0;">09:40</div>
<div style="left:730.70px;top:10.50px;width:183.00px;height:17.80px;background:#38a4f8;"></div>
<div class="c" style="left:724.70px;top:22.50px;width:50px;color:#ffffff;font:12px/0 'Liberation Mono',monospace;transform:scaleX(0.83);-webkit-text-stroke:0.3px #ffffff;">Spec.</div>
<div class="c" style="left:771.10px;top:22.50px;width:50px;color:#ffffff;font:12px/0 'Liberation Mono',monospace;transform:scaleX(0.83);-webkit-text-stroke:0.3px #ffffff;">Data</div>
<div class="c" style="left:815.40px;top:22.50px;width:50px;color:#d42045;font:12px/0 'Liberation Mono',monospace;transform:scaleX(0.83);-webkit-text-stroke:0.3px #d42045;">Chro.</div>
<div class="c" style="left:861.00px;top:22.50px;width:50px;color:#ffffff;font:12px/0 'Liberation Mono',monospace;transform:scaleX(0.83);-webkit-text-stroke:0.3px #ffffff;">Set.</div>
<div style="left:819.70px;top:26.70px;width:45.50px;height:2.00px;background:#d42040;"></div>
<div style="left:730.70px;top:28.30px;width:183.00px;height:255.70px;background:#ffffff;"></div>
<div class="lab" style="left:743.50px;top:42.30px;">L(cd/m<sup>2</sup>)</div>
<div class="val" style="left:795.60px;top:40.80px;width:100px;"></div>
<div style="left:743.20px;top:48.40px;width:152.00px;height:1.70px;background:#cfcfcf;"></div>
<div class="lab" style="left:743.50px;top:61.23px;">Footlamber (fl)</div>
<div class="val" style="left:795.60px;top:59.73px;width:100px;"></div>
<div style="left:743.20px;top:67.33px;width:152.00px;height:1.70px;background:#cfcfcf;"></div>
<div class="lab" style="left:743.50px;top:80.16px;">CCT(K)</div>
<div class="val" style="left:795.60px;top:78.66px;width:100px;"></div>
<div style="left:743.20px;top:86.26px;width:152.00px;height:1.70px;background:#cfcfcf;"></div>
<div class="lab" style="left:743.50px;top:99.09px;">Duv</div>
<div class="val" style="left:795.60px;top:97.59px;width:100px;">-0.<i></i>02658</div>
<div style="left:743.20px;top:105.19px;width:152.00px;height:1.70px;background:#cfcfcf;"></div>
<div style="left:730.70px;top:284.00px;width:183.00px;height:17.00px;background:#38a4f8;"></div>
<div style="left:733.60px;top:296.20px;width:177.50px;height:2.00px;background:#ffffff;"></div>
<div style="left:730.70px;top:301.00px;width:183.00px;height:21.30px;background:linear-gradient(#5a5a5a 0px,#3a3a3a 3px,#1a1a1a 10px,#141414 21px);"></div>
<div style="left:912.50px;top:301.00px;width:1.20px;height:21.30px;background:#555;"></div>
<div class="c" style="left:778.70px;top:114.00px;width:80px;color:#3a3ae8;font:bold 8px/0 'Liberation Sans',sans-serif;">CIE1960</div>
<div style="left:756.40px;top:120.30px;width:160.00px;height:144.00px;background:#fff;"></div>
<div style="left:756.63px;top:201.71px;width:99.51px;height:60.82px;background:radial-gradient(circle at 31.7px 13.2px, rgba(255,255,255,0.97) 0px, rgba(255,255,255,0.55) 7.8px, rgba(255,255,255,0.12) 18.2px, rgba(255,255,255,0) 26.0px), conic-gradient(from 0deg at 31.7px 13.2px, #a8ff00 -31.4deg, #f0ff00 2.6deg, #ff9800 44.1deg, #ff5000 66.3deg, #ff2800 76.0deg, #ff1000 80.7deg, #ff0800 83.0deg, #ff0400 84.3deg, #ff0000 85.1deg, #ff0000 85.8deg, #ff0008 86.1deg, #ff0040 99.0deg, #ff00b8 119.2deg, #c000ff 145.4deg, #3000ff 169.1deg, #2800ff 169.9deg, #2000ff 172.9deg, #1408ff 176.5deg, #0820ff 182.7deg, #0040ff 194.9deg, #0060ff 206.2deg, #0080ff 222.3deg, #00b0ff 241.4deg, #00f0f0 258.7deg, #00ff90 271.4deg, #00ff50 279.7deg, #00ff30 285.1deg, #00ff18 289.0deg, #00ff00 292.1deg, #00ff00 294.5deg, #08ff00 296.7deg, #10ff00 298.9deg, #18ff00 301.4deg, #28ff00 304.2deg, #3cff00 307.8deg, #58ff00 312.5deg, #80ff00 319.0deg, #a8ff00 328.6deg, #f0ff00 362.6deg);clip-path:polygon(40.9px 60.8px,40.1px 60.8px,37.3px 58.9px,34.3px 56.7px,29.8px 53.3px,22.8px 46.5px,18.1px 40.8px,13.0px 33.7px,8.1px 26.0px,4.3px 18.7px,1.7px 12.5px,0.3px 7.9px,0.0px 4.6px,0.5px 2.4px,1.7px 1.0px,3.5px 0.3px,5.5px 0.1px,7.8px 0.0px,10.1px 0.0px,12.4px 0.1px,15.0px 0.3px,17.8px 0.5px,20.9px 0.8px,24.3px 1.1px,32.2px 1.9px,41.7px 2.8px,52.8px 3.9px,64.3px 5.1px,74.8px 6.1px,83.0px 6.9px,88.8px 7.5px,93.1px 7.9px,97.5px 8.4px,99.5px 8.6px);"></div>
<svg class="a" style="left:756px;top:120px;overflow:visible" width="162" height="146"><g stroke="#3a3a3a" stroke-width="1" stroke-dasharray="2.5 1" opacity="0.55"><line x1="0.50" y1="0.50" x2="0.50" y2="144.50"/><line x1="16.50" y1="0.50" x2="16.50" y2="144.50"/><line x1="32.50" y1="0.50" x2="32.50" y2="144.50"/><line x1="48.50" y1="0.50" x2="48.50" y2="144.50"/><line x1="64.50" y1="0.50" x2="64.50" y2="144.50"/><line x1="80.50" y1="0.50" x2="80.50" y2="144.50"/><line x1="96.50" y1="0.50" x2="96.50" y2="144.50"/><line x1="112.50" y1="0.50" x2="112.50" y2="144.50"/><line x1="128.50" y1="0.50" x2="128.50" y2="144.50"/><line x1="144.50" y1="0.50" x2="144.50" y2="144.50"/><line x1="160.50" y1="0.50" x2="160.50" y2="144.50"/><line x1="0.50" y1="144.50" x2="160.50" y2="144.50"/><line x1="0.50" y1="128.50" x2="160.50" y2="128.50"/><line x1="0.50" y1="112.50" x2="160.50" y2="112.50"/><line x1="0.50" y1="96.50" x2="160.50" y2="96.50"/><line x1="0.50" y1="80.50" x2="160.50" y2="80.50"/><line x1="0.50" y1="64.50" x2="160.50" y2="64.50"/><line x1="0.50" y1="48.50" x2="160.50" y2="48.50"/><line x1="0.50" y1="32.50" x2="160.50" y2="32.50"/><line x1="0.50" y1="16.50" x2="160.50" y2="16.50"/><line x1="0.50" y1="0.50" x2="160.50" y2="0.50"/></g><path d="M72.10 87.56 L57.67 86.65 L49.21 86.85 L43.95 87.65 L40.49 88.69 L36.42 90.79 L34.23 92.60 L32.46 94.64 L30.85 97.37 L29.82 99.96 L29.20 102.12" stroke="#555" stroke-width="0.9" fill="none"/></svg>
<div class="t" style="left:745.90px;top:264.30px;font:bold 5px/0 'Liberation Mono',monospace;color:#333;">0.0</div>
<div class="t" style="left:745.90px;top:248.30px;font:bold 5px/0 'Liberation Mono',monospace;color:#333;">0.1</div>
<div class="t" style="left:745.90px;top:232.30px;font:bold 5px/0 'Liberation Mono',monospace;color:#333;">0.2</div>
<div class="t" style="left:745.90px;top:216.30px;font:bold 5px/0 'Liberation Mono',monospace;color:#333;">0.3</div>
<div class="t" style="left:745.90px;top:200.30px;font:bold 5px/0 'Liberation Mono',monospace;color:#333;">0.4</div>
<div class="t" style="left:745.90px;top:184.30px;font:bold 5px/0 'Liberation Mono',monospace;color:#333;">0.5</div>
<div class="t" style="left:745.90px;top:168.30px;font:bold 5px/0 'Liberation Mono',monospace;color:#333;">0.6</div>
<div class="t" style="left:745.90px;top:152.30px;font:bold 5px/0 'Liberation Mono',monospace;color:#333;">0.7</div>
<div class="t" style="left:745.90px;top:136.30px;font:bold 5px/0 'Liberation Mono',monospace;color:#333;">0.8</div>
<div class="t" style="left:745.90px;top:120.30px;font:bold 5px/0 'Liberation Mono',monospace;color:#333;">0.9</div>
<div class="t" style="left:752.40px;top:268.80px;font:bold 5px/0 'Liberation Mono',monospace;color:#333;">0.0</div>
<div class="t" style="left:768.40px;top:268.80px;font:bold 5px/0 'Liberation Mono',monospace;color:#333;">0.1</div>
<div class="t" style="left:784.40px;top:268.80px;font:bold 5px/0 'Liberation Mono',monospace;color:#333;">0.2</div>
<div class="t" style="left:800.40px;top:268.80px;font:bold 5px/0 'Liberation Mono',monospace;color:#333;">0.3</div>
<div class="t" style="left:816.40px;top:268.80px;font:bold 5px/0 'Liberation Mono',monospace;color:#333;">0.4</div>
<div class="t" style="left:832.40px;top:268.80px;font:bold 5px/0 'Liberation Mono',monospace;color:#333;">0.5</div>
<div class="t" style="left:848.40px;top:268.80px;font:bold 5px/0 'Liberation Mono',monospace;color:#333;">0.6</div>
<div class="t" style="left:864.40px;top:268.80px;font:bold 5px/0 'Liberation Mono',monospace;color:#333;">0.7</div>
<div class="t" style="left:880.40px;top:268.80px;font:bold 5px/0 'Liberation Mono',monospace;color:#333;">0.8</div>
<div class="t" style="left:896.40px;top:268.80px;font:bold 5px/0 'Liberation Mono',monospace;color:#333;">0.9</div>
<div class="t" style="left:912.40px;top:268.80px;font:bold 5px/0 'Liberation Mono',monospace;color:#333;">0.10</div>
<div class="t" style="left:780.40px;top:277.50px;font:9.5px/0 'Liberation Sans',sans-serif;color:#222;letter-spacing:0.3px;">u=0.1999 v=0.3000</div>
<div style="left:843.00px;top:285.00px;width:41.50px;height:10.00px;background:#fff;border:1px solid #2060e0;box-sizing:border-box;"></div>
<div class="t" style="left:844.50px;top:290.20px;font:9.6px/0 'Liberation Sans',sans-serif;color:#111;letter-spacing:0.2px;">T:730ms</div>
<div style="left:887.40px;top:285.00px;width:18.50px;height:10.00px;background:#fff;border:1px solid #2060e0;box-sizing:border-box;"></div>
<div class="t" style="left:888.60px;top:290.20px;font:8.6px/0 'Liberation Sans',sans-serif;color:#111;letter-spacing:-0.15px;">Auto</div>
<div style="left:794.90px;top:286.30px;width:3.60px;height:3.60px;background:#000000;border-radius:50%;"></div>
<div style="left:802.40px;top:286.30px;width:3.60px;height:3.60px;background:#ffffff;border-radius:50%;"></div>
<div style="left:809.90px;top:286.30px;width:3.60px;height:3.60px;background:#000000;border-radius:50%;"></div>
<div style="left:817.40px;top:286.30px;width:3.60px;height:3.60px;background:#000000;border-radius:50%;"></div>
<div style="left:824.90px;top:286.30px;width:3.60px;height:3.60px;background:#000000;border-radius:50%;"></div>
<div style="left:832.40px;top:286.30px;width:3.60px;height:3.60px;background:#000000;border-radius:50%;"></div>
<svg class="a" style="left:744.70px;top:305.00px" width="9" height="8"><path d="M0 0L8.5 4L0 8Z" fill="#7ee000"/></svg>
<svg class="a" style="left:780.10px;top:305.00px" width="11" height="8"><path d="M0 0L7 4L0 8Z" fill="#7ee000"/><rect x="7.8" y="0" width="2.6" height="8" fill="#7ee000"/></svg>
<div style="left:818.20px;top:305.00px;width:7.70px;height:7.60px;background:#b4b4b4;"></div>
<svg class="a" style="left:854.20px;top:303.80px" width="10" height="10"><rect x="0.3" y="0.3" width="9.4" height="9.4" rx="1" fill="#7ee000"/><path d="M2 1.2L5 4L8 1.2Z" fill="#2a3a10"/><path d="M1.5 8.8L5 5.5L8.5 8.8Z" fill="#4a7a00"/></svg>
<svg class="a" style="left:889.20px;top:303.50px" width="12" height="10"><path d="M0.5 3L4 3L5 4L10 4L10 9.5L0.5 9.5Z" fill="#7ee000"/><path d="M1.5 6L11.5 6L10 9.5L0.5 9.5Z" fill="#5cb000"/><path d="M6 2.5Q9 0 11.5 1.5" stroke="#7ee000" fill="none" stroke-width="1"/></svg>
<div class="c" style="left:728.30px;top:319.20px;width:40px;color:#7ee000;font:bold 5.6px/0 'Liberation Mono',monospace;transform:scaleX(0.8);">Multi.</div>
<div class="c" style="left:765.50px;top:319.20px;width:40px;color:#7ee000;font:bold 5.6px/0 'Liberation Mono',monospace;transform:scaleX(0.8);">Single</div>
<div class="c" style="left:802.00px;top:319.20px;width:40px;color:#707070;font:bold 5.6px/0 'Liberation Mono',monospace;transform:scaleX(0.8);">Stop</div>
<div class="c" style="left:839.00px;top:319.20px;width:40px;color:#7ee000;font:bold 5.6px/0 'Liberation Mono',monospace;transform:scaleX(0.8);">Save</div>
<div class="c" style="left:875.20px;top:319.20px;width:40px;color:#7ee000;font:bold 5.6px/0 'Liberation Mono',monospace;transform:scaleX(0.8);">Open</div>
<div style="left:0.00px;top:322.00px;width:851.00px;height:19.50px;background:#ffffff;"></div>
<svg class="a" style="left:2px;top:324.5px" width="7" height="6"><rect x="0" y="0" width="2" height="2" fill="#e03030"/><rect x="2.5" y="0" width="2" height="2" fill="#30a030"/><rect x="5" y="0" width="2" height="2" fill="#3060e0"/><rect x="0" y="2.5" width="2" height="2" fill="#e0c030"/><rect x="2.5" y="2.5" width="2" height="2" fill="#a030c0"/><rect x="5" y="2.5" width="2" height="2" fill="#30c0c0"/><rect x="0" y="4.5" width="7" height="1.5" fill="#444"/></svg>
<div class="t" style="left:9.70px;top:328.10px;font:7.6px/0 'Liberation Sans',sans-serif;color:#222;transform:scaleX(0.745);transform-origin:0 0;">无标题 - OHSP Spectral Illuminance Analyzer V1.37</div>
<div style="left:796.00px;top:327.00px;width:5.00px;height:0.90px;background:#333;"></div>
<svg class="a" style="left:817px;top:324px" width="7" height="7"><rect x="0.5" y="2" width="4.5" height="4.5" fill="none" stroke="#333" stroke-width="0.9"/><path d="M2 2V0.5H6.5V5H5" fill="none" stroke="#333" stroke-width="0.9"/></svg>
<svg class="a" style="left:837px;top:323.5px" width="8" height="8"><path d="M0.5 0.5L7.5 7.5M7.5 0.5L0.5 7.5" stroke="#333" stroke-width="0.9"/></svg>
<div class="t" style="left:3.20px;top:337.30px;font:7.2px/0 'Liberation Sans',sans-serif;color:#222;transform:scaleX(0.8);transform-origin:0 0;">File</div>
<div class="t" style="left:18.50px;top:337.30px;font:7.2px/0 'Liberation Sans',sans-serif;color:#222;transform:scaleX(0.8);transform-origin:0 0;">Test</div>
<div class="t" style="left:34.40px;top:337.30px;font:7.2px/0 'Liberation Sans',sans-serif;color:#222;transform:scaleX(0.8);transform-origin:0 0;">Setting</div>
<div class="t" style="left:58.20px;top:337.30px;font:7.2px/0 'Liberation Sans',sans-serif;color:#222;transform:scaleX(0.8);transform-origin:0 0;">Window</div>
<div class="t" style="left:85.50px;top:337.30px;font:7.2px/0 'Liberation Sans',sans-serif;color:#222;transform:scaleX(0.8);transform-origin:0 0;">Help</div>
<div style="left:0.00px;top:341.50px;width:851.00px;height:1.50px;background:#dcdcdc;"></div>
<div style="left:0.00px;top:343.00px;width:851.00px;height:19.50px;background:#f0f0f0;"></div>
<div style="left:0.00px;top:362.50px;width:851.00px;height:1.50px;background:#a8a8a8;"></div>
<div style="left:0.00px;top:364.00px;width:851.00px;height:442.00px;background:#f0f0f0;"></div>
<svg class="a" style="left:2.30px;top:345.20px;overflow:visible" width="15" height="15"><path d="M1 5L6 13.5L14 10L13.5 2L9 4Z" fill="#f2c820" stroke="#b08a10" stroke-width="0.7"/><path d="M1 5L6 13.5L7 8Z" fill="#ffe060"/><path d="M3 5Q6 0.5 11 2.5L10 0.5L13.5 3.5L10 6L10.5 4Q7 2.5 4 6Z" fill="#40a030"/></svg>
<svg class="a" style="left:20.00px;top:345.50px;overflow:visible" width="14" height="15"><rect x="0.5" y="0.5" width="13" height="14" rx="1.5" fill="#5a8ed8" stroke="#30609a" stroke-width="0.8"/><rect x="3" y="0.8" width="8" height="4.5" fill="#d8d8d8"/><rect x="2.5" y="7" width="9" height="6" fill="#e8f0fa"/></svg>
<svg class="a" style="left:37.60px;top:345.20px;overflow:visible" width="14" height="15"><ellipse cx="5.5" cy="2.5" rx="5" ry="2" fill="#dcdcdc" stroke="#a0a0a0" stroke-width="0.6"/><path d="M0.5 2.5V12.5Q5.5 15.5 10.5 12.5V2.5" fill="#cacaca" stroke="#909090" stroke-width="0.6"/><path d="M0.5 6Q5.5 8.5 10.5 6M0.5 9.5Q5.5 12 10.5 9.5" stroke="#e8e8e8" stroke-width="0.8" fill="none"/><path d="M6 9.5H10V7.5L13.5 11L10 14.5V12.5H6Z" fill="#50b030"/></svg>
<svg class="a" style="left:55.00px;top:345.20px;overflow:visible" width="14" height="15"><ellipse cx="5.5" cy="2.5" rx="5" ry="2" fill="#dcdcdc" stroke="#a0a0a0" stroke-width="0.6"/><path d="M0.5 2.5V12.5Q5.5 15.5 10.5 12.5V2.5" fill="#cacaca" stroke="#909090" stroke-width="0.6"/><path d="M0.5 6Q5.5 8.5 10.5 6M0.5 9.5Q5.5 12 10.5 9.5" stroke="#e8e8e8" stroke-width="0.8" fill="none"/><rect x="7" y="7" width="6.5" height="7.5" rx="1" fill="#3a8ee0"/><rect x="8.5" y="8.5" width="3.5" height="1.5" fill="#fff"/><rect x="8.5" y="11.5" width="3.5" height="1.5" fill="#fff"/></svg>
<svg class="a" style="left:73.00px;top:345.20px;overflow:visible" width="15" height="15"><rect x="1.5" y="2.5" width="13" height="12" fill="#eaf3fb" stroke="#7aaad8" stroke-width="0.8"/><path d="M1.5 6H14.5M1.5 9H14.5M1.5 12H14.5M5 2.5V14.5M8 2.5V14.5M11 2.5V14.5" stroke="#8cb8e0" stroke-width="0.6"/><rect x="0.5" y="0.5" width="6" height="5" fill="#48b040"/><path d="M2 1.5L5 4.5M5 1.5L2 4.5" stroke="#fff" stroke-width="0.9"/></svg>
<svg class="a" style="left:90.50px;top:345.20px;overflow:visible" width="14" height="15"><path d="M1 1.5Q7 6.5 13 14M12.5 0.5Q7 7 1.5 14.5" stroke="#d42020" stroke-width="1.8" fill="none" stroke-linecap="round"/><path d="M2 3Q7 7.5 12 13.5" stroke="#801010" stroke-width="0.6" fill="none"/></svg>
<div style="left:107.40px;top:344.50px;width:1.00px;height:16.00px;background:#c6c6c6;"></div>
<div style="left:162.00px;top:344.50px;width:1.00px;height:16.00px;background:#c6c6c6;"></div>
<div style="left:201.40px;top:344.50px;width:1.00px;height:16.00px;background:#c6c6c6;"></div>
<div style="left:239.50px;top:344.50px;width:1.00px;height:16.00px;background:#c6c6c6;"></div>
<div style="left:277.60px;top:344.50px;width:1.00px;height:16.00px;background:#c6c6c6;"></div>
<div style="left:297.30px;top:344.50px;width:1.00px;height:16.00px;background:#c6c6c6;"></div>
<svg class="a" style="left:114.00px;top:347.70px;overflow:visible" width="10" height="10"><path d="M0.5 0.5L9.5 5L0.5 9.5Z" fill="#8cc43c" stroke="#6aa020" stroke-width="0.5"/></svg>
<svg class="a" style="left:130.40px;top:347.70px;overflow:visible" width="12" height="10"><path d="M0.5 0.5L6.5 5L0.5 9.5Z" fill="#8cc43c"/><path d="M5 0.5L11.5 5L5 9.5Z" fill="#8cc43c" stroke="#6aa020" stroke-width="0.5"/></svg>
<svg class="a" style="left:148.50px;top:347.20px;overflow:visible" width="9.5" height="10"><rect x="0.5" y="0.5" width="8.5" height="9" rx="1" fill="#9a9a9a" stroke="#8a8a8a" stroke-width="0.5"/></svg>
<svg class="a" style="left:169.00px;top:345.20px;overflow:visible" width="10" height="15"><circle cx="5" cy="5.5" r="4.6" fill="#ffb030"/><circle cx="4" cy="4.3" r="2.5" fill="#ffe8b0"/><rect x="3" y="10" width="4" height="4" rx="1" fill="#8ab0d8"/></svg>
<svg class="a" style="left:187.00px;top:345.20px;overflow:visible" width="14" height="15"><circle cx="5" cy="5.5" r="4.6" fill="#ffb030"/><circle cx="4" cy="4.3" r="2.5" fill="#ffe8b0"/><rect x="3" y="10" width="4" height="4" rx="1" fill="#8ab0d8"/><text x="7.5" y="14.5" font-family="Liberation Sans" font-size="5.5" font-weight="bold" fill="#3030c0">1X</text></svg>
<svg class="a" style="left:205.80px;top:345.70px;overflow:visible" width="14" height="14"><circle cx="7" cy="7" r="4.5" fill="none" stroke="#2a78d8" stroke-width="2.8" stroke-dasharray="2.2 1.3"/><circle cx="7" cy="7" r="4.3" fill="none" stroke="#4a98f0" stroke-width="1.8"/><circle cx="7" cy="7" r="2" fill="#f0f0f0"/></svg>
<svg class="a" style="left:223.00px;top:345.20px;overflow:visible" width="15" height="15"><rect x="0.5" y="0.5" width="12" height="14" fill="#e4ecf4" stroke="#a0b0c0" stroke-width="0.6"/><path d="M3 13L12 2.5L14 4.5L5 14.5L2.5 15Z" fill="#f0a020" stroke="#222" stroke-width="0.6"/><path d="M11.5 2.5L13 1L15 3L13.5 4.5Z" fill="#e04050"/></svg>
<svg class="a" style="left:241.90px;top:345.20px;overflow:visible" width="15" height="15"><rect x="4" y="1" width="7" height="5" fill="#f4f4f4" stroke="#aaa" stroke-width="0.5"/><path d="M0.5 7Q1 4.5 4 4.5H11Q14 4.5 14.5 7V12H0.5Z" fill="#8c8c8c"/><ellipse cx="7.5" cy="9" rx="6" ry="3" fill="#b0b0b0"/><rect x="8" y="10" width="5.5" height="4" fill="#50a050"/><rect x="10" y="10" width="3.5" height="2" fill="#3070d0"/></svg>
<svg class="a" style="left:261.30px;top:345.20px;overflow:visible" width="15" height="15"><rect x="2.5" y="0.5" width="11" height="14" fill="#eef2f6" stroke="#a0a8b0" stroke-width="0.6"/><circle cx="9" cy="5" r="3.6" fill="#e8f0f8" stroke="#3070d0" stroke-width="1.3"/><path d="M6.5 7.5L1 13.5" stroke="#3070d0" stroke-width="1.8"/></svg>
<svg class="a" style="left:280.70px;top:345.20px;overflow:visible" width="15" height="15"><circle cx="7.5" cy="7.5" r="7" fill="#3a78d8"/><circle cx="7.5" cy="6.5" r="5.5" fill="#5a9af0" opacity="0.7"/><text x="7.6" y="11.5" font-family="Liberation Sans" font-size="11" font-weight="bold" fill="#fff" text-anchor="middle">?</text></svg>
<div style="left:303.80px;top:344.20px;width:97.00px;height:13.60px;background:#fafafa;border:1px solid #d8d8d8;box-sizing:border-box;"></div>
<div style="left:305.00px;top:345.20px;width:94.70px;height:11.60px;background:#14b426;"></div>
<div class="t" style="left:404.00px;top:351.00px;font:6.5px/0 'Liberation Sans',sans-serif;color:#222;transform:scaleX(0.87);transform-origin:0 0;">Integral Time</div>
<div style="left:442.30px;top:345.00px;width:27.20px;height:10.80px;background:#f4f4f4;border:1px solid #d0d0d0;box-sizing:border-box;"></div>
<div class="t" style="left:445.00px;top:350.60px;font:6px/0 'Liberation Sans',sans-serif;color:#999;">710</div>
<div class="t" style="left:472.50px;top:351.00px;font:6.5px/0 'Liberation Sans',sans-serif;color:#222;transform:scaleX(0.87);transform-origin:0 0;">ms</div>
<div style="left:484.20px;top:346.80px;width:6.80px;height:6.80px;background:#fff;border:1px solid #555;box-sizing:border-box;"></div>
<svg class="a" style="left:485.00px;top:347.50px;overflow:visible" width="6" height="6"><path d="M1 2.8L2.5 4.5L5 1" stroke="#222" stroke-width="0.9" fill="none"/></svg>
<div class="t" style="left:492.00px;top:351.00px;font:6.5px/0 'Liberation Sans',sans-serif;color:#222;transform:scaleX(0.87);transform-origin:0 0;">Auto</div>
<div style="left:507.50px;top:345.00px;width:19.40px;height:12.00px;background:#e6e6e6;border:1px solid #adadad;box-sizing:border-box;"></div>
<div class="t" style="left:513.50px;top:351.00px;font:6.5px/0 'Liberation Sans',sans-serif;color:#222;transform:scaleX(0.87);transform-origin:0 0;">Set</div>
<div style="left:8.00px;top:369.70px;width:149.50px;height:274.50px;background:#f0f0f0;border:1px solid #d4d4d4;box-sizing:border-box;"></div>
<div style="left:9.00px;top:370.70px;width:147.50px;height:10.50px;background:#ebebeb;border-bottom:1px solid #d6d6d6;box-sizing:border-box;"></div>
<div style="left:10.00px;top:371.50px;width:33.00px;height:10.00px;background:#fdfdfd;border:1px solid #cfcfcf;border-bottom:none;box-sizing:border-box;"></div>
<svg class="a" style="left:12.00px;top:373.20px" width="7" height="6"><g fill="#6a8ad0"><rect x="0" y="0" width="1.5" height="1.2"/><rect x="0" y="2.3" width="1.5" height="1.2"/><rect x="0" y="4.6" width="1.5" height="1.2"/><rect x="2.5" y="0" width="4.5" height="1.2"/><rect x="2.5" y="2.3" width="4.5" height="1.2"/><rect x="2.5" y="4.6" width="4.5" height="1.2"/></g></svg>
<div class="t" style="left:19.50px;top:376.70px;font:6.2px/0 'Liberation Sans',sans-serif;color:#333;transform:scaleX(0.77);transform-origin:0 0;">Parameter</div>
<svg class="a" style="left:148.20px;top:373.20px" width="6" height="6"><path d="M0.8 0.8L5.2 5.2M5.2 0.8L0.8 5.2" stroke="#111" stroke-width="1.25"/></svg>
<div style="left:12.00px;top:385.00px;width:140.00px;height:254.50px;background:#fff;border:1px solid #c8c8c8;box-sizing:border-box;"></div>
<div style="left:143.80px;top:386.00px;width:7.00px;height:252.50px;background:#f0f0f0;"></div>
<div style="left:144.80px;top:510.80px;width:5.20px;height:116.00px;background:#cdcdcd;"></div>
<svg class="a" style="left:144.5px;top:389.5px" width="6" height="4"><path d="M0.8 3.2L3 1L5.2 3.2" stroke="#333" stroke-width="0.9" fill="none"/></svg>
<svg class="a" style="left:144.5px;top:632px" width="6" height="4"><path d="M0.8 0.8L3 3L5.2 0.8" stroke="#333" stroke-width="0.9" fill="none"/></svg>
<div style="left:19.00px;top:386.00px;width:0.80px;height:158.60px;background:#c4c4c4;"></div>
<div style="left:27.20px;top:386.00px;width:0.80px;height:158.60px;background:#c4c4c4;"></div>
<div style="left:27.20px;top:555.90px;width:0.80px;height:26.95px;background:#c4c4c4;"></div>
<div style="left:27.20px;top:594.15px;width:0.80px;height:34.60px;background:#c4c4c4;"></div>
<div style="left:27.20px;top:391.60px;width:3.50px;height:0.80px;background:#c4c4c4;"></div>
<div class="t" style="left:31.60px;top:391.60px;font:5.8px/0 'Liberation Sans',sans-serif;color:#2a2a2a;transform:scaleX(0.86);transform-origin:0 0;">Purity(%): 7.9</div>
<div style="left:27.20px;top:399.25px;width:3.50px;height:0.80px;background:#c4c4c4;"></div>
<div class="t" style="left:31.60px;top:399.25px;font:5.8px/0 'Liberation Sans',sans-serif;color:#2a2a2a;transform:scaleX(0.86);transform-origin:0 0;">HalfWidth(nm): 195.4</div>
<div style="left:27.20px;top:406.90px;width:3.50px;height:0.80px;background:#c4c4c4;"></div>
<div class="t" style="left:31.60px;top:406.90px;font:5.8px/0 'Liberation Sans',sans-serif;color:#2a2a2a;transform:scaleX(0.86);transform-origin:0 0;">Peak(nm): 543.3</div>
<div style="left:27.20px;top:414.55px;width:3.50px;height:0.80px;background:#c4c4c4;"></div>
<div class="t" style="left:31.60px;top:414.55px;font:5.8px/0 'Liberation Sans',sans-serif;color:#2a2a2a;transform:scaleX(0.86);transform-origin:0 0;">Center(nm): 527.9</div>
<div style="left:27.20px;top:422.20px;width:3.50px;height:0.80px;background:#c4c4c4;"></div>
<div class="t" style="left:31.60px;top:422.20px;font:5.8px/0 'Liberation Sans',sans-serif;color:#2a2a2a;transform:scaleX(0.86);transform-origin:0 0;">Centroid(nm): 547.4</div>
<div style="left:27.20px;top:429.85px;width:3.50px;height:0.80px;background:#c4c4c4;"></div>
<div class="t" style="left:31.60px;top:429.85px;font:5.8px/0 'Liberation Sans',sans-serif;color:#2a2a2a;transform:scaleX(0.86);transform-origin:0 0;">R ratio(%): 12.7</div>
<div style="left:27.20px;top:437.50px;width:3.50px;height:0.80px;background:#c4c4c4;"></div>
<div class="t" style="left:31.60px;top:437.50px;font:5.8px/0 'Liberation Sans',sans-serif;color:#2a2a2a;transform:scaleX(0.86);transform-origin:0 0;">G ratio(%): 82.9</div>
<div style="left:27.20px;top:445.15px;width:3.50px;height:0.80px;background:#c4c4c4;"></div>
<div class="t" style="left:31.60px;top:445.15px;font:5.8px/0 'Liberation Sans',sans-serif;color:#2a2a2a;transform:scaleX(0.86);transform-origin:0 0;">B ratio(%): 4.3</div>
<div style="left:27.20px;top:452.80px;width:3.50px;height:0.80px;background:#c4c4c4;"></div>
<div class="t" style="left:31.60px;top:452.80px;font:5.8px/0 'Liberation Sans',sans-serif;color:#2a2a2a;transform:scaleX(0.86);transform-origin:0 0;">CIE1931 X: 567.106</div>
<div style="left:27.20px;top:460.45px;width:3.50px;height:0.80px;background:#c4c4c4;"></div>
<div class="t" style="left:31.60px;top:460.45px;font:5.8px/0 'Liberation Sans',sans-serif;color:#2a2a2a;transform:scaleX(0.86);transform-origin:0 0;">CIE1931 Y: 657.429</div>
<div style="left:27.20px;top:468.10px;width:3.50px;height:0.80px;background:#c4c4c4;"></div>
<div class="t" style="left:31.60px;top:468.10px;font:5.8px/0 'Liberation Sans',sans-serif;color:#2a2a2a;transform:scaleX(0.86);transform-origin:0 0;">CIE1931 Z: 621.138</div>
<div style="left:27.20px;top:475.75px;width:3.50px;height:0.80px;background:#c4c4c4;"></div>
<div class="t" style="left:31.60px;top:475.75px;font:5.8px/0 'Liberation Sans',sans-serif;color:#2a2a2a;transform:scaleX(0.86);transform-origin:0 0;">TLCI-2012: 100</div>
<div style="left:27.20px;top:483.40px;width:3.50px;height:0.80px;background:#c4c4c4;"></div>
<div class="t" style="left:31.60px;top:483.40px;font:5.8px/0 'Liberation Sans',sans-serif;color:#2a2a2a;transform:scaleX(0.86);transform-origin:0 0;">Integral Time(ms): 710</div>
<div style="left:27.20px;top:491.05px;width:3.50px;height:0.80px;background:#c4c4c4;"></div>
<div class="t" style="left:31.60px;top:491.05px;font:5.8px/0 'Liberation Sans',sans-serif;color:#2a2a2a;transform:scaleX(0.86);transform-origin:0 0;">Peak Signal: 60042</div>
<div style="left:27.20px;top:498.70px;width:3.50px;height:0.80px;background:#c4c4c4;"></div>
<div class="t" style="left:31.60px;top:498.70px;font:5.8px/0 'Liberation Sans',sans-serif;color:#2a2a2a;transform:scaleX(0.86);transform-origin:0 0;">Dark Signal: 2322</div>
<div style="left:27.20px;top:506.35px;width:3.50px;height:0.80px;background:#c4c4c4;"></div>
<div class="t" style="left:31.60px;top:506.35px;font:5.8px/0 'Liberation Sans',sans-serif;color:#2a2a2a;transform:scaleX(0.86);transform-origin:0 0;">Compensate level: 2890</div>
<div style="left:27.20px;top:514.00px;width:3.50px;height:0.80px;background:#c4c4c4;"></div>
<div class="t" style="left:31.60px;top:514.00px;font:5.8px/0 'Liberation Sans',sans-serif;color:#2a2a2a;transform:scaleX(0.86);transform-origin:0 0;">Voltage(V): 1.000</div>
<div style="left:27.20px;top:521.65px;width:3.50px;height:0.80px;background:#c4c4c4;"></div>
<div class="t" style="left:31.60px;top:521.65px;font:5.8px/0 'Liberation Sans',sans-serif;color:#2a2a2a;transform:scaleX(0.86);transform-origin:0 0;">Current(A): 1.000</div>
<div style="left:27.20px;top:529.30px;width:3.50px;height:0.80px;background:#c4c4c4;"></div>
<div class="t" style="left:31.60px;top:529.30px;font:5.8px/0 'Liberation Sans',sans-serif;color:#2a2a2a;transform:scaleX(0.86);transform-origin:0 0;">Power(W): 1.000</div>
<div style="left:27.20px;top:536.95px;width:3.50px;height:0.80px;background:#c4c4c4;"></div>
<div class="t" style="left:31.60px;top:536.95px;font:5.8px/0 'Liberation Sans',sans-serif;color:#2a2a2a;transform:scaleX(0.86);transform-origin:0 0;">Power Factor: 1.000</div>
<div style="left:27.20px;top:544.60px;width:3.50px;height:0.80px;background:#c4c4c4;"></div>
<div class="t" style="left:31.60px;top:544.60px;font:5.8px/0 'Liberation Sans',sans-serif;color:#2a2a2a;transform:scaleX(0.86);transform-origin:0 0;">Test date: 2019-04-03</div>
<div style="left:16.60px;top:549.85px;width:5.00px;height:5.00px;background:#f4f4f4;border:0.8px solid #b0b0b0;box-sizing:border-box;"></div>
<div style="left:17.80px;top:551.95px;width:2.60px;height:0.70px;background:#777;"></div>
<div class="t" style="left:23.00px;top:552.25px;font:5.8px/0 'Liberation Sans',sans-serif;color:#2a2a2a;transform:scaleX(0.86);transform-origin:0 0;">Instrument Status</div>
<div style="left:27.20px;top:559.90px;width:3.50px;height:0.80px;background:#c4c4c4;"></div>
<div class="t" style="left:31.60px;top:559.90px;font:5.8px/0 'Liberation Sans',sans-serif;color:#2a2a2a;transform:scaleX(0.86);transform-origin:0 0;">Type: OHSP-350A</div>
<div style="left:27.20px;top:567.55px;width:3.50px;height:0.80px;background:#c4c4c4;"></div>
<div class="t" style="left:31.60px;top:567.55px;font:5.8px/0 'Liberation Sans',sans-serif;color:#2a2a2a;transform:scaleX(0.86);transform-origin:0 0;">SN: 201808725</div>
<div style="left:27.20px;top:575.20px;width:3.50px;height:0.80px;background:#c4c4c4;"></div>
<div class="t" style="left:31.60px;top:575.20px;font:5.8px/0 'Liberation Sans',sans-serif;color:#2a2a2a;transform:scaleX(0.86);transform-origin:0 0;">Start Wave(nm): 380</div>
<div style="left:27.20px;top:582.85px;width:3.50px;height:0.80px;background:#c4c4c4;"></div>
<div class="t" style="left:31.60px;top:582.85px;font:5.8px/0 'Liberation Sans',sans-serif;color:#2a2a2a;transform:scaleX(0.86);transform-origin:0 0;">End Wave(nm): 780</div>
<div style="left:16.60px;top:588.10px;width:5.00px;height:5.00px;background:#f4f4f4;border:0.8px solid #b0b0b0;box-sizing:border-box;"></div>
<div style="left:17.80px;top:590.20px;width:2.60px;height:0.70px;background:#777;"></div>
<div class="t" style="left:23.00px;top:590.50px;font:5.8px/0 'Liberation Sans',sans-serif;color:#2a2a2a;transform:scaleX(0.86);transform-origin:0 0;">Product Mark</div>
<div style="left:27.20px;top:598.15px;width:3.50px;height:0.80px;background:#c4c4c4;"></div>
<div class="t" style="left:31.60px;top:598.15px;font:5.8px/0 'Liberation Sans',sans-serif;color:#2a2a2a;transform:scaleX(0.86);transform-origin:0 0;">Product Model: OHSP-650T</div>
<div style="left:27.20px;top:605.80px;width:3.50px;height:0.80px;background:#c4c4c4;"></div>
<div class="t" style="left:31.60px;top:605.80px;font:5.8px/0 'Liberation Sans',sans-serif;color:#2a2a2a;transform:scaleX(0.86);transform-origin:0 0;">Manufacture: 杭州虹谱光电科技有限公司</div>
<div style="left:27.20px;top:613.45px;width:3.50px;height:0.80px;background:#c4c4c4;"></div>
<div class="t" style="left:31.60px;top:613.45px;font:5.8px/0 'Liberation Sans',sans-serif;color:#2a2a2a;transform:scaleX(0.86);transform-origin:0 0;">Temperature(℃): 20</div>
<div style="left:27.20px;top:621.10px;width:3.50px;height:0.80px;background:#c4c4c4;"></div>
<div class="t" style="left:31.60px;top:621.10px;font:5.8px/0 'Liberation Sans',sans-serif;color:#2a2a2a;transform:scaleX(0.86);transform-origin:0 0;">Humidity(%): 65</div>
<div style="left:27.20px;top:628.75px;width:3.50px;height:0.80px;background:#c4c4c4;"></div>
<div class="t" style="left:31.60px;top:628.75px;font:5.8px/0 'Liberation Sans',sans-serif;color:#2a2a2a;transform:scaleX(0.86);transform-origin:0 0;">Tester: admin</div>
<div style="left:16.60px;top:634.00px;width:5.00px;height:5.00px;background:#f4f4f4;border:0.8px solid #b0b0b0;box-sizing:border-box;"></div>
<div style="left:17.80px;top:636.10px;width:2.60px;height:0.70px;background:#777;"></div>
<div style="left:18.75px;top:635.10px;width:0.70px;height:2.60px;background:#777;"></div>
<div class="t" style="left:23.00px;top:636.40px;font:5.8px/0 'Liberation Sans',sans-serif;color:#2a2a2a;transform:scaleX(0.86);transform-origin:0 0;">Electrical Parameter</div>
<div style="left:8.00px;top:647.40px;width:149.50px;height:158.50px;background:#f0f0f0;border:1px solid #d4d4d4;box-sizing:border-box;"></div>
<div style="left:9.00px;top:648.40px;width:147.50px;height:10.50px;background:#ebebeb;border-bottom:1px solid #d6d6d6;box-sizing:border-box;"></div>
<div style="left:10.00px;top:649.20px;width:23.00px;height:10.00px;background:#fdfdfd;border:1px solid #cfcfcf;border-bottom:none;box-sizing:border-box;"></div>
<svg class="a" style="left:12.00px;top:650.90px" width="7" height="7"><circle cx="3.5" cy="3.2" r="3.2" fill="url(#wheel)"/></svg>
<div class="t" style="left:19.50px;top:654.40px;font:6.2px/0 'Liberation Sans',sans-serif;color:#333;transform:scaleX(0.77);transform-origin:0 0;">TM30</div>
<svg class="a" style="left:148.00px;top:650.90px" width="6" height="6"><path d="M0.8 0.8L5.2 5.2M5.2 0.8L0.8 5.2" stroke="#111" stroke-width="1.25"/></svg>
<div style="left:9.50px;top:661.00px;width:144.50px;height:141.80px;background:#fff;border:1px solid #c0c0c0;box-shadow:1px 1px 0 #9a9a9a;box-sizing:border-box;"></div>
<div style="left:11.60px;top:662.80px;width:141.00px;height:137.90px;background:radial-gradient(circle 50px at 50% 52%, rgba(255,255,255,0.78) 0%, rgba(255,255,255,0.66) 75%, rgba(255,255,255,0.0) 100%), radial-gradient(circle 100px at 50% 52%, rgba(255,255,255,0.35) 0%, rgba(255,255,255,0.08) 85%, rgba(255,255,255,0) 100%), conic-gradient(from 0deg at 50% 51%, #f2f29c 0deg, #fac47c 30deg, #fb9e50 48deg, #f47a8a 95deg, #d8509a 128deg, #b460b8 150deg, #9c80e0 185deg, #6a88d0 212deg, #4084ac 232deg, #4ea89a 268deg, #7ecc7c 305deg, #a2dc72 325deg, #f2f29c 360deg);"></div>
<svg class="a" style="left:11.6px;top:662.8px" width="141" height="138"><g stroke="#222" stroke-width="0.9" stroke-dasharray="1.3 1.6"><line x1="23.30" y1="0" x2="23.30" y2="137.9"/><line x1="47.20" y1="0" x2="47.20" y2="137.9"/><line x1="70.90" y1="0" x2="70.90" y2="137.9"/><line x1="94.10" y1="0" x2="94.10" y2="137.9"/><line x1="117.40" y1="0" x2="117.40" y2="137.9"/><line x1="0" y1="23.20" x2="141" y2="23.20"/><line x1="0" y1="46.50" x2="141" y2="46.50"/><line x1="0" y1="69.60" x2="141" y2="69.60"/><line x1="0" y1="92.80" x2="141" y2="92.80"/><line x1="0" y1="115.70" x2="141" y2="115.70"/></g></svg>
<div class="t" style="left:35.00px;top:672.00px;font:bold 7px/0 'Liberation Mono',monospace;color:#111;">Test</div>
<div style="left:55.40px;top:671.50px;width:11.80px;height:1.20px;background:#e83030;"></div>
<div class="t" style="left:81.40px;top:672.00px;font:bold 7px/0 'Liberation Mono',monospace;color:#111;">Ref</div>
<div style="left:97.70px;top:671.50px;width:11.20px;height:1.20px;background:#3048e8;"></div>
<div style="left:159.30px;top:369.70px;width:522.20px;height:216.00px;background:#f0f0f0;border:1px solid #d4d4d4;box-sizing:border-box;"></div>
<div style="left:160.30px;top:370.70px;width:520.20px;height:10.50px;background:#ebebeb;border-bottom:1px solid #d6d6d6;box-sizing:border-box;"></div>
<div style="left:161.80px;top:371.50px;width:30.00px;height:10.00px;background:#fdfdfd;border:1px solid #cfcfcf;border-bottom:none;box-sizing:border-box;"></div>
<svg class="a" style="left:163.80px;top:373.20px" width="7" height="7"><rect x="0.3" y="0.3" width="6.4" height="6.4" fill="#dbe8f7" stroke="#9ab8dc" stroke-width="0.6"/><rect x="0.3" y="0.3" width="6.4" height="1.6" fill="#b8d8a8"/></svg>
<div class="t" style="left:171.30px;top:376.70px;font:6.2px/0 'Liberation Sans',sans-serif;color:#333;transform:scaleX(0.77);transform-origin:0 0;">Data List</div>
<svg class="a" style="left:673.30px;top:373.20px" width="6" height="6"><path d="M0.8 0.8L5.2 5.2M5.2 0.8L0.8 5.2" stroke="#111" stroke-width="1.25"/></svg>
<div style="left:161.50px;top:384.40px;width:518.50px;height:199.60px;background:#fff;border:1px solid #a8a8a8;box-sizing:border-box;"></div>
<div style="left:162.50px;top:385.40px;width:516.50px;height:11.20px;background:linear-gradient(#fafafa,#ededed);border-bottom:1px solid #d8d8d8;box-sizing:border-box;"></div>
<div style="left:162.50px;top:405.40px;width:516.50px;height:0.60px;background:#f5f5f5;"></div>
<div style="left:162.50px;top:413.50px;width:516.50px;height:0.60px;background:#f5f5f5;"></div>
<div style="left:162.50px;top:421.60px;width:516.50px;height:0.60px;background:#f5f5f5;"></div>
<div style="left:162.50px;top:429.70px;width:516.50px;height:0.60px;background:#f5f5f5;"></div>
<div style="left:162.50px;top:437.80px;width:516.50px;height:0.60px;background:#f5f5f5;"></div>
<div style="left:162.50px;top:445.90px;width:516.50px;height:0.60px;background:#f5f5f5;"></div>
<div style="left:162.50px;top:454.00px;width:516.50px;height:0.60px;background:#f5f5f5;"></div>
<div style="left:162.50px;top:462.10px;width:516.50px;height:0.60px;background:#f5f5f5;"></div>
<div style="left:162.50px;top:470.20px;width:516.50px;height:0.60px;background:#f5f5f5;"></div>
<div style="left:162.50px;top:478.30px;width:516.50px;height:0.60px;background:#f5f5f5;"></div>
<div style="left:162.50px;top:486.40px;width:516.50px;height:0.60px;background:#f5f5f5;"></div>
<div style="left:162.50px;top:494.50px;width:516.50px;height:0.60px;background:#f5f5f5;"></div>
<div style="left:162.50px;top:502.60px;width:516.50px;height:0.60px;background:#f5f5f5;"></div>
<div style="left:162.50px;top:510.70px;width:516.50px;height:0.60px;background:#f5f5f5;"></div>
<div style="left:162.50px;top:518.80px;width:516.50px;height:0.60px;background:#f5f5f5;"></div>
<div style="left:162.50px;top:526.90px;width:516.50px;height:0.60px;background:#f5f5f5;"></div>
<div style="left:162.50px;top:535.00px;width:516.50px;height:0.60px;background:#f5f5f5;"></div>
<div style="left:162.50px;top:543.10px;width:516.50px;height:0.60px;background:#f5f5f5;"></div>
<div style="left:162.50px;top:551.20px;width:516.50px;height:0.60px;background:#f5f5f5;"></div>
<div style="left:162.50px;top:559.30px;width:516.50px;height:0.60px;background:#f5f5f5;"></div>
<div style="left:162.50px;top:567.40px;width:516.50px;height:0.60px;background:#f5f5f5;"></div>
<div style="left:197.00px;top:385.40px;width:0.80px;height:11.20px;background:#d4d4d4;"></div>
<div style="left:197.00px;top:396.40px;width:0.60px;height:162.00px;background:#f0f0f0;"></div>
<div style="left:232.50px;top:385.40px;width:0.80px;height:11.20px;background:#d4d4d4;"></div>
<div style="left:232.50px;top:396.40px;width:0.60px;height:162.00px;background:#f0f0f0;"></div>
<div style="left:268.70px;top:385.40px;width:0.80px;height:11.20px;background:#d4d4d4;"></div>
<div style="left:268.70px;top:396.40px;width:0.60px;height:162.00px;background:#f0f0f0;"></div>
<div style="left:304.30px;top:385.40px;width:0.80px;height:11.20px;background:#d4d4d4;"></div>
<div style="left:304.30px;top:396.40px;width:0.60px;height:162.00px;background:#f0f0f0;"></div>
<div style="left:339.20px;top:385.40px;width:0.80px;height:11.20px;background:#d4d4d4;"></div>
<div style="left:339.20px;top:396.40px;width:0.60px;height:162.00px;background:#f0f0f0;"></div>
<div style="left:374.70px;top:385.40px;width:0.80px;height:11.20px;background:#d4d4d4;"></div>
<div style="left:374.70px;top:396.40px;width:0.60px;height:162.00px;background:#f0f0f0;"></div>
<div style="left:410.20px;top:385.40px;width:0.80px;height:11.20px;background:#d4d4d4;"></div>
<div style="left:410.20px;top:396.40px;width:0.60px;height:162.00px;background:#f0f0f0;"></div>
<div style="left:447.00px;top:385.40px;width:0.80px;height:11.20px;background:#d4d4d4;"></div>
<div style="left:447.00px;top:396.40px;width:0.60px;height:162.00px;background:#f0f0f0;"></div>
<div style="left:481.90px;top:385.40px;width:0.80px;height:11.20px;background:#d4d4d4;"></div>
<div style="left:481.90px;top:396.40px;width:0.60px;height:162.00px;background:#f0f0f0;"></div>
<div style="left:517.70px;top:385.40px;width:0.80px;height:11.20px;background:#d4d4d4;"></div>
<div style="left:517.70px;top:396.40px;width:0.60px;height:162.00px;background:#f0f0f0;"></div>
<div style="left:553.20px;top:385.40px;width:0.80px;height:11.20px;background:#d4d4d4;"></div>
<div style="left:553.20px;top:396.40px;width:0.60px;height:162.00px;background:#f0f0f0;"></div>
<div style="left:588.80px;top:385.40px;width:0.80px;height:11.20px;background:#d4d4d4;"></div>
<div style="left:588.80px;top:396.40px;width:0.60px;height:162.00px;background:#f0f0f0;"></div>
<div style="left:624.00px;top:385.40px;width:0.80px;height:11.20px;background:#d4d4d4;"></div>
<div style="left:624.00px;top:396.40px;width:0.60px;height:162.00px;background:#f0f0f0;"></div>
<div style="left:659.50px;top:385.40px;width:0.80px;height:11.20px;background:#d4d4d4;"></div>
<div style="left:659.50px;top:396.40px;width:0.60px;height:162.00px;background:#f0f0f0;"></div>
<div class="a" style="left:161.5px;top:384.4px;width:518.5px;height:199.6px;overflow:hidden">
<div class="c" style="left:2.50px;top:7.2px;width:40px;font:5.6px/0 'Liberation Sans',sans-serif;color:#333;">No</div>
<div class="a" style="left:5px;top:14px;font:5.6px/0 'Liberation Sans',sans-serif;color:#333;"></div>
<div class="c" style="left:33.25px;top:7.2px;width:40px;font:5.6px/0 'Liberation Sans',sans-serif;color:#333;">Test time</div>
<div class="c" style="left:33.25px;top:17.2px;width:40px;font:5.6px/0 'Liberation Sans',sans-serif;color:#333;">09:24:03</div>
<div class="c" style="left:69.10px;top:7.2px;width:40px;font:5.6px/0 'Liberation Sans',sans-serif;color:#333;">Φ(lm)</div>
<div class="c" style="left:69.10px;top:17.2px;width:40px;font:5.6px/0 'Liberation Sans',sans-serif;color:#333;">449.02</div>
<div class="c" style="left:105.00px;top:7.2px;width:40px;font:5.6px/0 'Liberation Sans',sans-serif;color:#333;">η(lm/W)</div>
<div class="c" style="left:105.00px;top:17.2px;width:40px;font:5.6px/0 'Liberation Sans',sans-serif;color:#333;">449.02</div>
<div class="c" style="left:140.25px;top:7.2px;width:40px;font:5.6px/0 'Liberation Sans',sans-serif;color:#333;">CCT(K)</div>
<div class="c" style="left:140.25px;top:17.2px;width:40px;font:5.6px/0 'Liberation Sans',sans-serif;color:#333;">6582</div>
<div class="c" style="left:175.45px;top:7.2px;width:40px;font:5.6px/0 'Liberation Sans',sans-serif;color:#333;">Duv</div>
<div class="c" style="left:175.45px;top:17.2px;width:40px;font:5.6px/0 'Liberation Sans',sans-serif;color:#333;">0.01905</div>
<div class="c" style="left:210.95px;top:7.2px;width:40px;font:5.6px/0 'Liberation Sans',sans-serif;color:#333;">x</div>
<div class="c" style="left:210.95px;top:17.2px;width:40px;font:5.6px/0 'Liberation Sans',sans-serif;color:#333;">0.3073</div>
<div class="c" style="left:247.10px;top:7.2px;width:40px;font:5.6px/0 'Liberation Sans',sans-serif;color:#333;">y</div>
<div class="c" style="left:247.10px;top:17.2px;width:40px;font:5.6px/0 'Liberation Sans',sans-serif;color:#333;">0.3562</div>
<div class="c" style="left:282.95px;top:7.2px;width:40px;font:5.6px/0 'Liberation Sans',sans-serif;color:#333;">u</div>
<div class="c" style="left:282.95px;top:17.2px;width:40px;font:5.6px/0 'Liberation Sans',sans-serif;color:#333;">0.1845</div>
<div class="c" style="left:318.30px;top:7.2px;width:40px;font:5.6px/0 'Liberation Sans',sans-serif;color:#333;">v</div>
<div class="c" style="left:318.30px;top:17.2px;width:40px;font:5.6px/0 'Liberation Sans',sans-serif;color:#333;">0.3209</div>
<div class="c" style="left:353.95px;top:7.2px;width:40px;font:5.6px/0 'Liberation Sans',sans-serif;color:#333;">u'</div>
<div class="c" style="left:353.95px;top:17.2px;width:40px;font:5.6px/0 'Liberation Sans',sans-serif;color:#333;">0.1845</div>
<div class="c" style="left:389.50px;top:7.2px;width:40px;font:5.6px/0 'Liberation Sans',sans-serif;color:#333;">v'</div>
<div class="c" style="left:389.50px;top:17.2px;width:40px;font:5.6px/0 'Liberation Sans',sans-serif;color:#333;">0.4814</div>
<div class="c" style="left:424.90px;top:7.2px;width:40px;font:5.6px/0 'Liberation Sans',sans-serif;color:#333;">SDCM</div>
<div class="c" style="left:424.90px;top:17.2px;width:40px;font:5.6px/0 'Liberation Sans',sans-serif;color:#333;">15.59</div>
<div class="c" style="left:460.25px;top:7.2px;width:40px;font:5.6px/0 'Liberation Sans',sans-serif;color:#333;">Ra</div>
<div class="c" style="left:460.25px;top:17.2px;width:40px;font:5.6px/0 'Liberation Sans',sans-serif;color:#333;">85.0</div>
<div class="c" style="left:498.25px;top:7.2px;width:40px;font:5.6px/0 'Liberation Sans',sans-serif;color:#333;">R1</div>
<div class="c" style="left:498.25px;top:17.2px;width:40px;font:5.6px/0 'Liberation Sans',sans-serif;color:#333;">78</div>
</div>
<div class="t" style="left:175.30px;top:401.60px;font:5.6px/0 'Liberation Sans',sans-serif;color:#333;">1</div>
<div style="left:164.90px;top:388.20px;width:6.60px;height:6.60px;background:#fff;border:0.9px solid #6a8ab0;box-sizing:border-box;"></div>
<svg class="a" style="left:165.80px;top:389.10px;overflow:visible" width="5" height="5"><path d="M0.8 2.5L2 4L4.3 0.8" stroke="#1a9a2a" stroke-width="1.1" fill="none"/></svg>
<div style="left:166.70px;top:398.30px;width:6.60px;height:6.60px;background:#fff;border:0.9px solid #6a8ab0;box-sizing:border-box;"></div>
<svg class="a" style="left:167.60px;top:399.20px;overflow:visible" width="5" height="5"><path d="M0.8 2.5L2 4L4.3 0.8" stroke="#1a9a2a" stroke-width="1.1" fill="none"/></svg>
<div style="left:162.50px;top:575.00px;width:516.50px;height:8.00px;background:#f0f0f0;"></div>
<div style="left:169.50px;top:575.60px;width:137.40px;height:6.80px;background:#cdcdcd;"></div>
<svg class="a" style="left:164.00px;top:576.80px;overflow:visible" width="4" height="5"><path d="M3 0.5L1 2.5L3 4.5" stroke="#333" stroke-width="0.9" fill="none"/></svg>
<svg class="a" style="left:673.50px;top:576.80px;overflow:visible" width="4" height="5"><path d="M1 0.5L3 2.5L1 4.5" stroke="#333" stroke-width="0.9" fill="none"/></svg>
<div style="left:159.30px;top:588.30px;width:522.20px;height:217.70px;background:#f0f0f0;border:1px solid #d4d4d4;box-sizing:border-box;"></div>
<div style="left:160.30px;top:589.30px;width:520.20px;height:10.50px;background:#ebebeb;border-bottom:1px solid #d6d6d6;box-sizing:border-box;"></div>
<div style="left:161.80px;top:590.10px;width:38.00px;height:10.00px;background:#fdfdfd;border:1px solid #cfcfcf;border-bottom:none;box-sizing:border-box;"></div>
<svg class="a" style="left:163.80px;top:591.80px" width="8" height="7"><path d="M0.5 6.5L3.5 0.8L7.5 6.5Z" fill="none" stroke="#e04040" stroke-width="1"/><path d="M0.5 6.5L7.5 6.5" stroke="#3080e0" stroke-width="1.2"/><path d="M2 5L4 3L6 5" stroke="#30a040" stroke-width="0.8" fill="none"/></svg>
<div class="t" style="left:171.30px;top:595.30px;font:6.2px/0 'Liberation Sans',sans-serif;color:#333;transform:scaleX(0.77);transform-origin:0 0;">Spectrogram</div>
<div style="left:217.50px;top:591.30px;width:0.80px;height:7.50px;background:#c4c4c4;"></div>
<svg class="a" style="left:202.00px;top:591.80px" width="7" height="7"><rect x="0" y="0" width="7" height="7" fill="#a8c850"/><path d="M1 6L3 1L6 6" stroke="#e08020" stroke-width="1.2" fill="none"/></svg>
<div class="t" style="left:209.50px;top:595.30px;font:6.2px/0 'Liberation Sans',sans-serif;color:#333;transform:scaleX(0.77);transform-origin:0 0;">CRI</div>
<div style="left:246.00px;top:591.30px;width:0.80px;height:7.50px;background:#c4c4c4;"></div>
<svg class="a" style="left:221.00px;top:591.80px" width="7" height="7"><path d="M0.5 7V1.5Q2 -0.5 3.5 1.5V7M3.5 1.5Q5 -0.5 6.5 1.5V7" stroke="#222" stroke-width="1.1" fill="none"/></svg>
<div class="t" style="left:228.50px;top:595.30px;font:6.2px/0 'Liberation Sans',sans-serif;color:#333;transform:scaleX(0.77);transform-origin:0 0;">Flicker</div>
<svg class="a" style="left:673.30px;top:591.80px" width="6" height="6"><path d="M0.8 0.8L5.2 5.2M5.2 0.8L0.8 5.2" stroke="#111" stroke-width="1.25"/></svg>
<div style="left:161.80px;top:604.20px;width:516.70px;height:198.10px;background:#3396fc;border-top:1px solid #e6d8c8;border-left:1px solid #e6d8c8;box-sizing:border-box;"></div>
<div class="t" style="left:231.30px;top:613.20px;font:8.3px/0 'Liberation Serif',serif;color:#1c2a3a;letter-spacing:0.55px;">Wave: 543.1nm Value: 0.810uW/cm<sup style="font-size:5px;vertical-align:3px">2</sup>/nm</div>
<svg class="a" style="left:186.10px;top:624.30px;overflow:visible" width="460.20" height="161.70"><defs><linearGradient id="g669" x1="0" y1="0" x2="460.20" y2="0" gradientUnits="userSpaceOnUse"><stop offset="0.0000" stop-color="#00002a"/><stop offset="0.0500" stop-color="#000860"/><stop offset="0.1125" stop-color="#0020b0"/><stop offset="0.1675" stop-color="#0040ff"/><stop offset="0.2250" stop-color="#0058c8"/><stop offset="0.2700" stop-color="#007890"/><stop offset="0.3125" stop-color="#00a850"/><stop offset="0.3500" stop-color="#40c040"/><stop offset="0.4000" stop-color="#a0ff40"/><stop offset="0.4375" stop-color="#d8e830"/><stop offset="0.4875" stop-color="#e0c810"/><stop offset="0.5250" stop-color="#f0a000"/><stop offset="0.5625" stop-color="#ff8000"/><stop offset="0.6125" stop-color="#e05000"/><stop offset="0.6625" stop-color="#c02000"/><stop offset="0.7125" stop-color="#a00000"/><stop offset="0.8000" stop-color="#880000"/><stop offset="0.9000" stop-color="#600000"/><stop offset="1.0025" stop-color="#3a0000"/></linearGradient></defs><path d="M0 161.70 L0.00 143.91 L0.63 143.58 L1.49 143.13 L2.52 142.60 L3.62 142.00 L4.73 141.35 L5.75 140.68 L6.71 140.02 L7.67 139.36 L8.63 138.66 L9.59 137.86 L10.55 136.94 L11.51 135.83 L12.46 134.53 L13.42 133.07 L14.38 131.48 L15.34 129.78 L16.30 127.99 L17.26 126.13 L18.22 124.06 L19.18 121.75 L20.13 119.35 L21.09 117.02 L22.05 114.92 L23.01 113.19 L23.97 111.91 L24.93 110.97 L25.89 110.26 L26.84 109.66 L27.80 109.05 L28.76 108.34 L29.72 107.53 L30.68 106.72 L31.64 105.91 L32.60 105.11 L33.56 104.30 L34.52 103.49 L35.47 102.68 L36.43 101.87 L37.39 101.06 L38.35 100.25 L39.31 99.45 L40.27 98.64 L41.21 97.83 L42.14 97.02 L43.07 96.21 L44.02 95.40 L44.99 94.59 L46.02 93.79 L47.13 93.05 L48.32 92.41 L49.54 91.76 L50.75 91.03 L51.89 90.12 L52.92 88.94 L53.82 87.44 L54.63 85.70 L55.37 83.78 L56.08 81.75 L56.78 79.67 L57.52 77.62 L58.27 75.53 L58.97 73.36 L59.68 71.15 L60.42 68.93 L61.23 66.76 L62.13 64.68 L63.17 62.74 L64.34 60.91 L65.58 59.12 L66.81 57.31 L67.99 55.42 L69.03 53.36 L69.93 51.10 L70.73 48.69 L71.47 46.19 L72.18 43.66 L72.89 41.18 L73.63 38.81 L74.40 36.37 L75.17 33.78 L75.93 31.23 L76.70 28.93 L77.47 27.07 L78.23 25.87 L78.97 25.44 L79.68 25.63 L80.39 26.28 L81.13 27.19 L81.94 28.19 L82.84 29.11 L83.81 30.02 L84.84 31.08 L85.93 32.24 L87.10 33.42 L88.36 34.55 L89.74 35.57 L91.29 36.57 L93.02 37.61 L94.84 38.61 L96.68 39.47 L98.46 40.10 L100.09 40.43 L101.58 40.33 L102.99 39.86 L104.34 39.16 L105.63 38.39 L106.90 37.68 L108.15 37.19 L109.36 36.85 L110.53 36.53 L111.67 36.28 L112.79 36.14 L113.91 36.16 L115.05 36.38 L116.21 36.97 L117.39 37.91 L118.57 39.01 L119.74 40.07 L120.87 40.87 L121.95 41.23 L122.93 41.05 L123.79 40.45 L124.61 39.62 L125.49 38.69 L126.49 37.83 L127.71 37.19 L129.16 36.82 L130.82 36.59 L132.60 36.43 L134.44 36.26 L136.28 36.00 L138.06 35.57 L139.82 34.86 L141.61 33.90 L143.41 32.85 L145.17 31.86 L146.85 31.10 L148.41 30.72 L149.84 30.93 L151.16 31.62 L152.40 32.54 L153.60 33.42 L154.79 33.98 L156.01 33.96 L157.25 33.23 L158.50 31.98 L159.73 30.42 L160.96 28.75 L162.17 27.16 L163.37 25.87 L164.54 24.90 L165.68 24.08 L166.82 23.35 L167.95 22.64 L169.10 21.89 L170.27 21.02 L171.50 20.07 L172.77 19.10 L174.05 18.09 L175.32 17.01 L176.57 15.84 L177.75 14.55 L178.91 13.07 L180.05 11.38 L181.17 9.60 L182.23 7.85 L183.21 6.22 L184.08 4.85 L184.82 3.63 L185.44 2.46 L185.99 1.41 L186.49 0.60 L186.99 0.10 L187.53 0.00 L188.07 0.24 L188.55 0.72 L189.04 1.52 L189.58 2.69 L190.21 4.32 L190.98 6.47 L191.91 9.44 L192.94 13.24 L194.07 17.48 L195.29 21.80 L196.56 25.80 L197.89 29.11 L199.30 31.72 L200.83 33.96 L202.42 35.88 L204.02 37.55 L205.60 39.04 L207.09 40.43 L208.49 41.61 L209.82 42.52 L211.12 43.25 L212.42 43.90 L213.75 44.54 L215.14 45.28 L216.62 46.14 L218.17 47.07 L219.75 48.00 L221.32 48.87 L222.87 49.60 L224.35 50.13 L225.77 50.28 L227.18 50.07 L228.55 49.72 L229.88 49.47 L231.17 49.53 L232.40 50.13 L233.58 51.51 L234.72 53.54 L235.81 55.89 L236.86 58.21 L237.87 60.18 L238.84 61.45 L239.68 61.86 L240.35 61.66 L240.99 61.09 L241.71 60.43 L242.64 59.92 L243.91 59.83 L245.67 60.29 L247.86 61.12 L250.26 62.10 L252.66 63.03 L254.83 63.69 L256.56 63.87 L257.81 63.46 L258.75 62.61 L259.46 61.50 L260.04 60.28 L260.58 59.13 L261.16 58.21 L261.77 57.42 L262.33 56.60 L262.84 55.84 L263.32 55.25 L263.80 54.93 L264.27 54.98 L264.71 55.46 L265.11 56.30 L265.50 57.40 L265.91 58.69 L266.37 60.07 L266.92 61.45 L267.50 62.89 L268.09 64.50 L268.74 66.20 L269.49 67.91 L270.40 69.59 L271.52 71.15 L272.94 72.61 L274.63 74.02 L276.48 75.39 L278.38 76.72 L280.21 78.00 L281.87 79.23 L283.29 80.33 L284.56 81.27 L285.76 82.16 L286.99 83.13 L288.34 84.27 L289.93 85.70 L291.80 87.58 L293.89 89.83 L296.11 92.27 L298.36 94.68 L300.55 96.87 L302.58 98.64 L304.51 99.95 L306.42 100.97 L308.26 101.77 L310.00 102.41 L311.57 102.96 L312.94 103.49 L314.04 103.96 L314.90 104.33 L315.60 104.60 L316.22 104.81 L316.84 104.97 L317.54 105.11 L318.23 105.14 L318.82 105.05 L319.41 104.90 L320.09 104.81 L320.97 104.84 L322.14 105.11 L323.66 105.65 L325.46 106.42 L327.46 107.33 L329.55 108.28 L331.65 109.18 L333.64 109.96 L335.64 110.55 L337.74 111.03 L339.83 111.47 L341.83 111.93 L343.63 112.48 L345.15 113.19 L346.32 114.10 L347.20 115.17 L347.88 116.32 L348.47 117.50 L349.06 118.64 L349.75 119.66 L350.41 120.61 L350.95 121.54 L351.48 122.44 L352.14 123.25 L353.05 123.95 L354.35 124.51 L356.16 124.88 L358.40 125.08 L360.90 125.17 L363.47 125.20 L365.95 125.23 L368.16 125.32 L370.15 125.39 L372.08 125.38 L373.91 125.37 L375.62 125.44 L377.16 125.66 L378.51 126.13 L379.60 126.91 L380.43 127.98 L381.10 129.21 L381.71 130.47 L382.35 131.64 L383.12 132.59 L383.93 133.34 L384.69 133.97 L385.49 134.51 L386.40 134.99 L387.50 135.42 L388.87 135.83 L390.65 136.27 L392.79 136.73 L395.12 137.14 L397.48 137.45 L399.67 137.57 L401.52 137.45 L402.95 136.95 L404.08 136.10 L405.05 135.07 L406.00 134.03 L407.08 133.15 L408.43 132.59 L410.08 132.38 L411.92 132.38 L413.89 132.54 L415.93 132.80 L417.96 133.11 L419.93 133.40 L421.93 133.67 L424.02 133.94 L426.12 134.26 L428.11 134.66 L429.92 135.17 L431.44 135.83 L432.62 136.71 L433.53 137.80 L434.24 139.01 L434.85 140.23 L435.42 141.36 L436.04 142.30 L436.67 143.10 L437.23 143.85 L437.77 144.52 L438.30 145.05 L438.86 145.40 L439.49 145.53 L440.20 145.37 L440.98 144.93 L441.79 144.32 L442.60 143.61 L443.38 142.91 L444.09 142.30 L444.61 141.72 L444.95 141.10 L445.24 140.48 L445.67 139.90 L446.38 139.41 L447.54 139.06 L449.41 138.87 L451.89 138.82 L454.66 138.86 L457.39 138.94 L459.73 139.02 L461.35 139.06 L461.35 161.70Z" fill="url(#g669)"/></svg>
<div style="left:185.60px;top:624.30px;width:1.00px;height:161.70px;background:#e8f4ff;"></div>
<div style="left:185.60px;top:786.00px;width:472.00px;height:1.00px;background:#e8f4ff;"></div>
<div style="left:184.60px;top:624.30px;width:2.00px;height:0.80px;background:#e8f4ff;"></div>
<div style="left:373.60px;top:624.30px;width:1.10px;height:161.70px;background:#707070;"></div>
<div style="left:653.20px;top:624.70px;width:1.00px;height:13.00px;background:#d0d8f0;"></div>
<div style="left:653.20px;top:637.80px;width:1.00px;height:148.00px;background:#b070b8;"></div>
<div style="left:652.20px;top:782.00px;width:3.00px;height:4.00px;background:#40c060;"></div>
<div class="t" style="left:172.00px;top:624.30px;font:6.2px/0 'Liberation Mono',monospace;color:#1a2a40;">1.0</div>
<div class="t" style="left:172.00px;top:656.64px;font:6.2px/0 'Liberation Mono',monospace;color:#1a2a40;">0.8</div>
<div class="t" style="left:172.00px;top:688.98px;font:6.2px/0 'Liberation Mono',monospace;color:#1a2a40;">0.6</div>
<div class="t" style="left:172.00px;top:721.32px;font:6.2px/0 'Liberation Mono',monospace;color:#1a2a40;">0.4</div>
<div class="t" style="left:172.00px;top:753.66px;font:6.2px/0 'Liberation Mono',monospace;color:#1a2a40;">0.2</div>
<div class="c" style="left:171.10px;top:791.5px;width:30px;font:5.8px/0 'Liberation Sans',sans-serif;color:#1a2a40;">380</div>
<div class="c" style="left:217.12px;top:791.5px;width:30px;font:5.8px/0 'Liberation Sans',sans-serif;color:#1a2a40;">420</div>
<div class="c" style="left:263.14px;top:791.5px;width:30px;font:5.8px/0 'Liberation Sans',sans-serif;color:#1a2a40;">460</div>
<div class="c" style="left:309.16px;top:791.5px;width:30px;font:5.8px/0 'Liberation Sans',sans-serif;color:#1a2a40;">500</div>
<div class="c" style="left:355.18px;top:791.5px;width:30px;font:5.8px/0 'Liberation Sans',sans-serif;color:#1a2a40;">540</div>
<div class="c" style="left:401.20px;top:791.5px;width:30px;font:5.8px/0 'Liberation Sans',sans-serif;color:#1a2a40;">580</div>
<div class="c" style="left:447.22px;top:791.5px;width:30px;font:5.8px/0 'Liberation Sans',sans-serif;color:#1a2a40;">620</div>
<div class="c" style="left:493.24px;top:791.5px;width:30px;font:5.8px/0 'Liberation Sans',sans-serif;color:#1a2a40;">660</div>
<div class="c" style="left:539.26px;top:791.5px;width:30px;font:5.8px/0 'Liberation Sans',sans-serif;color:#1a2a40;">700</div>
<div class="c" style="left:585.28px;top:791.5px;width:30px;font:5.8px/0 'Liberation Sans',sans-serif;color:#1a2a40;">740</div>
<div class="c" style="left:631.30px;top:791.5px;width:30px;font:5.8px/0 'Liberation Sans',sans-serif;color:#1a2a40;">780</div>
<div style="left:684.30px;top:369.70px;width:164.00px;height:216.00px;background:#f0f0f0;border:1px solid #d4d4d4;box-sizing:border-box;"></div>
<div style="left:685.30px;top:370.70px;width:162.00px;height:10.50px;background:#ebebeb;border-bottom:1px solid #d6d6d6;box-sizing:border-box;"></div>
<div style="left:686.50px;top:371.50px;width:21.00px;height:10.00px;background:#fdfdfd;border:1px solid #cfcfcf;border-bottom:none;box-sizing:border-box;"></div>
<svg class="a" style="left:688.50px;top:373.20px" width="7" height="7"><circle cx="3.5" cy="3.3" r="3.3" fill="url(#wheel)"/></svg>
<div class="t" style="left:696.00px;top:376.70px;font:6.2px/0 'Liberation Sans',sans-serif;color:#333;transform:scaleX(0.77);transform-origin:0 0;">CIE</div>
<svg class="a" style="left:839.50px;top:373.20px" width="6" height="6"><path d="M0.8 0.8L5.2 5.2M5.2 0.8L0.8 5.2" stroke="#111" stroke-width="1.25"/></svg>
<div style="left:689.00px;top:386.80px;width:154.50px;height:185.00px;background:#fff;border:1px solid #c0c0c0;box-shadow:inset 1px 1px 0 #8a8a8a;box-sizing:border-box;"></div>
<div style="left:698.95px;top:408.82px;width:122.48px;height:151.76px;background:radial-gradient(circle at 51.3px 92.3px, rgba(255,255,255,0.97) 0px, rgba(255,255,255,0.55) 8.7px, rgba(255,255,255,0.12) 20.3px, rgba(255,255,255,0) 29.0px), conic-gradient(from 0deg at 51.3px 92.3px, #58ff00 -1.2deg, #80ff00 4.3deg, #a8ff00 11.1deg, #f0ff00 28.6deg, #ff9800 49.8deg, #ff5000 68.8deg, #ff2800 81.7deg, #ff1000 89.3deg, #ff0800 93.6deg, #ff0400 96.0deg, #ff0000 97.5deg, #ff0000 98.9deg, #ff0008 99.4deg, #ff0040 116.5deg, #ff00b8 145.9deg, #c000ff 179.1deg, #3000ff 200.9deg, #2800ff 201.3deg, #2000ff 202.7deg, #1408ff 204.2deg, #0820ff 206.8deg, #0040ff 212.0deg, #0060ff 217.0deg, #0080ff 225.4deg, #00b0ff 239.7deg, #00f0f0 261.8deg, #00ff90 287.5deg, #00ff50 307.0deg, #00ff30 319.2deg, #00ff18 327.2deg, #00ff00 332.8deg, #00ff00 336.8deg, #08ff00 340.1deg, #10ff00 343.4deg, #18ff00 346.6deg, #28ff00 350.2deg, #3cff00 354.1deg, #58ff00 358.8deg, #80ff00 364.3deg);clip-path:polygon(28.5px 151.8px,28.1px 151.7px,26.9px 150.7px,25.6px 149.4px,23.5px 147.2px,20.1px 142.1px,17.7px 136.8px,14.6px 128.4px,10.9px 115.9px,7.0px 98.7px,3.3px 77.1px,0.7px 54.1px,0.0px 32.8px,1.7px 15.3px,5.9px 4.0px,11.8px 0.0px,18.5px 1.4px,25.3px 5.1px,31.7px 9.6px,37.8px 14.6px,43.9px 20.1px,49.9px 25.9px,55.9px 32.0px,61.9px 38.3px,73.8px 51.1px,85.2px 63.6px,95.7px 75.0px,104.4px 84.5px,110.9px 91.5px,115.2px 96.2px,118.0px 99.2px,119.9px 101.2px,121.7px 103.2px,122.5px 104.1px);"></div>
<svg class="a" style="left:698.30px;top:396.70px;overflow:visible" width="135" height="165"><g stroke="#111" stroke-width="0.9" stroke-dasharray="1.2 1.6"><line x1="16.76" y1="0" x2="16.76" y2="164.80"/><line x1="33.52" y1="0" x2="33.52" y2="164.80"/><line x1="50.28" y1="0" x2="50.28" y2="164.80"/><line x1="67.04" y1="0" x2="67.04" y2="164.80"/><line x1="83.80" y1="0" x2="83.80" y2="164.80"/><line x1="100.56" y1="0" x2="100.56" y2="164.80"/><line x1="117.32" y1="0" x2="117.32" y2="164.80"/><line x1="0" y1="18.31" x2="134.08" y2="18.31"/><line x1="0" y1="36.62" x2="134.08" y2="36.62"/><line x1="0" y1="54.93" x2="134.08" y2="54.93"/><line x1="0" y1="73.24" x2="134.08" y2="73.24"/><line x1="0" y1="91.56" x2="134.08" y2="91.56"/><line x1="0" y1="109.87" x2="134.08" y2="109.87"/><line x1="0" y1="128.18" x2="134.08" y2="128.18"/><line x1="0" y1="146.49" x2="134.08" y2="146.49"/></g><rect x="0" y="0" width="134.08" height="164.80" fill="none" stroke="#555" stroke-width="0.9"/><path d="M98.16 92.82 L88.27 89.12 L79.95 89.05 L73.22 90.80 L63.77 95.80 L57.84 100.42 L52.54 105.53 L47.05 111.99 L42.99 117.61 L40.21 121.92" stroke="#111" stroke-width="1.1" fill="none"/><path d="M47.95 99.43H54.95M51.45 95.93V102.93" stroke="#333" stroke-width="1.1"/></svg>
<div class="t" style="left:693.30px;top:391.50px;font:6px/0 'Liberation Serif',serif;color:#222;">y</div>
<div class="t" style="left:691.80px;top:561.50px;font:4.6px/0 'Liberation Sans',sans-serif;color:#333;">0.0</div>
<div class="t" style="left:691.80px;top:543.19px;font:4.6px/0 'Liberation Sans',sans-serif;color:#333;">0.1</div>
<div class="t" style="left:691.80px;top:524.88px;font:4.6px/0 'Liberation Sans',sans-serif;color:#333;">0.2</div>
<div class="t" style="left:691.80px;top:506.57px;font:4.6px/0 'Liberation Sans',sans-serif;color:#333;">0.3</div>
<div class="t" style="left:691.80px;top:488.26px;font:4.6px/0 'Liberation Sans',sans-serif;color:#333;">0.4</div>
<div class="t" style="left:691.80px;top:469.94px;font:4.6px/0 'Liberation Sans',sans-serif;color:#333;">0.5</div>
<div class="t" style="left:691.80px;top:451.63px;font:4.6px/0 'Liberation Sans',sans-serif;color:#333;">0.6</div>
<div class="t" style="left:691.80px;top:433.32px;font:4.6px/0 'Liberation Sans',sans-serif;color:#333;">0.7</div>
<div class="t" style="left:691.80px;top:415.01px;font:4.6px/0 'Liberation Sans',sans-serif;color:#333;">0.8</div>
<div class="t" style="left:691.80px;top:396.70px;font:4.6px/0 'Liberation Sans',sans-serif;color:#333;">0.9</div>
<div class="t" style="left:695.30px;top:565.50px;font:4.6px/0 'Liberation Sans',sans-serif;color:#333;">0.0</div>
<div class="t" style="left:712.06px;top:565.50px;font:4.6px/0 'Liberation Sans',sans-serif;color:#333;">0.1</div>
<div class="t" style="left:728.82px;top:565.50px;font:4.6px/0 'Liberation Sans',sans-serif;color:#333;">0.2</div>
<div class="t" style="left:745.58px;top:565.50px;font:4.6px/0 'Liberation Sans',sans-serif;color:#333;">0.3</div>
<div class="t" style="left:762.34px;top:565.50px;font:4.6px/0 'Liberation Sans',sans-serif;color:#333;">0.4</div>
<div class="t" style="left:779.10px;top:565.50px;font:4.6px/0 'Liberation Sans',sans-serif;color:#333;">0.5</div>
<div class="t" style="left:795.86px;top:565.50px;font:4.6px/0 'Liberation Sans',sans-serif;color:#333;">0.6</div>
<div class="t" style="left:812.62px;top:565.50px;font:4.6px/0 'Liberation Sans',sans-serif;color:#333;">0.7</div>
<div class="t" style="left:829.38px;top:565.50px;font:4.6px/0 'Liberation Sans',sans-serif;color:#333;">0.8 x</div>
<div style="left:689.00px;top:573.50px;width:154.50px;height:9.00px;background:#f0f0f0;border:1px solid #d0d0d0;box-sizing:border-box;"></div>
<div style="left:690.00px;top:574.00px;width:23.00px;height:8.50px;background:#fff;border-right:1px solid #d0d0d0;box-sizing:border-box;"></div>
<div class="t" style="left:691.00px;top:578.00px;font:5.6px/0 'Liberation Serif',serif;color:#222;">CIE 1931</div>
<div style="left:715.50px;top:574.50px;width:0.70px;height:7.00px;background:#d0d0d0;"></div>
<div class="t" style="left:715.00px;top:578.00px;font:5.6px/0 'Liberation Serif',serif;color:#222;">CIE 1960</div>
<div style="left:739.50px;top:574.50px;width:0.70px;height:7.00px;background:#d0d0d0;"></div>
<div class="t" style="left:741.00px;top:578.00px;font:5.6px/0 'Liberation Serif',serif;color:#222;">CIE 1976</div>
<div style="left:765.50px;top:574.50px;width:0.70px;height:7.00px;background:#d0d0d0;"></div>
<div style="left:684.30px;top:588.30px;width:164.00px;height:217.70px;background:#f0f0f0;border:1px solid #d4d4d4;box-sizing:border-box;"></div>
<div style="left:685.30px;top:589.30px;width:162.00px;height:10.50px;background:#ebebeb;border-bottom:1px solid #d6d6d6;box-sizing:border-box;"></div>
<div style="left:686.00px;top:590.10px;width:24.50px;height:10.00px;background:#fdfdfd;border:1px solid #cfcfcf;border-bottom:none;box-sizing:border-box;"></div>
<svg class="a" style="left:688.00px;top:591.80px" width="7" height="7"><path d="M0.5 6.5L3.5 0.5L6.5 2.5" stroke="#5a90d8" stroke-width="1" fill="none"/></svg>
<div class="t" style="left:695.50px;top:595.30px;font:6.2px/0 'Liberation Sans',sans-serif;color:#333;transform:scaleX(0.77);transform-origin:0 0;">SDCM</div>
<div style="left:742.50px;top:591.30px;width:0.80px;height:7.50px;background:#c4c4c4;"></div>
<svg class="a" style="left:714.00px;top:591.80px" width="7" height="7"><rect x="0.5" y="0.5" width="6" height="6" fill="#9ab8e8" stroke="#4060a0" stroke-width="0.8"/></svg>
<div class="t" style="left:721.50px;top:595.30px;font:6.2px/0 'Liberation Sans',sans-serif;color:#333;transform:scaleX(0.77);transform-origin:0 0;">CHROMA</div>
<svg class="a" style="left:840.00px;top:591.80px" width="6" height="6"><path d="M0.8 0.8L5.2 5.2M5.2 0.8L0.8 5.2" stroke="#111" stroke-width="1.25"/></svg>
<div class="t" style="left:689.50px;top:611.50px;font:5.8px/0 'Liberation Sans',sans-serif;color:#222;">Select:</div>
<div style="left:708.00px;top:606.40px;width:57.50px;height:10.40px;background:linear-gradient(#f2f2f2,#e2e2e2);border:1px solid #b8b8b8;box-sizing:border-box;"></div>
<div class="t" style="left:710.50px;top:611.60px;font:5.8px/0 'Liberation Sans',sans-serif;color:#222;">Auto</div>
<svg class="a" style="left:759.50px;top:610.00px;overflow:visible" width="5" height="4"><path d="M0.5 0.8L2.5 2.8L4.5 0.8" stroke="#333" stroke-width="0.8" fill="none"/></svg>
<div style="left:688.00px;top:621.20px;width:156.00px;height:179.60px;background:#3393fa;border-top:1px solid #e8d8c8;border-left:1px solid #e8d8c8;box-shadow:1px 1px 0 #b8b8b8;box-sizing:border-box;"></div>
<svg class="a" style="left:688.00px;top:621.20px;overflow:visible" width="156" height="180"><g stroke="#e0f0ff" stroke-width="0.7" opacity="0.8"><line x1="5.80" y1="5.60" x2="5.80" y2="172.80"/><line x1="29.70" y1="5.60" x2="29.70" y2="172.80"/><line x1="54.30" y1="5.60" x2="54.30" y2="172.80"/><line x1="78.50" y1="5.60" x2="78.50" y2="172.80"/><line x1="103.00" y1="5.60" x2="103.00" y2="172.80"/><line x1="127.60" y1="5.60" x2="127.60" y2="172.80"/><line x1="151.50" y1="5.60" x2="151.50" y2="172.80"/><line x1="5.80" y1="5.60" x2="151.50" y2="5.60"/><line x1="5.80" y1="26.50" x2="151.50" y2="26.50"/><line x1="5.80" y1="47.00" x2="151.50" y2="47.00"/><line x1="5.80" y1="68.50" x2="151.50" y2="68.50"/><line x1="5.80" y1="90.00" x2="151.50" y2="90.00"/><line x1="5.80" y1="110.50" x2="151.50" y2="110.50"/><line x1="5.80" y1="131.40" x2="151.50" y2="131.40"/><line x1="5.80" y1="152.80" x2="151.50" y2="152.80"/><line x1="5.80" y1="172.80" x2="151.50" y2="172.80"/></g><g transform="translate(73.30 101.30) rotate(-49)"><ellipse cx="0" cy="0" rx="50" ry="21.5" fill="none" stroke="#30d070" stroke-width="1.4"/><ellipse cx="0" cy="0" rx="57" ry="28.5" fill="none" stroke="#30d070" stroke-width="0.8" opacity="0.9"/></g><circle cx="73.30" cy="101.30" r="1.8" fill="#fff" stroke="#40d080" stroke-width="0.5"/><path d="M12.40 63.30H19.40M15.90 59.80V66.80" stroke="#e02030" stroke-width="1.1"/></svg>
<div class="t" style="left:697.80px;top:632.30px;font:6.4px/0 'Liberation Sans',sans-serif;color:#f01830;-webkit-text-stroke:0.25px #f01830;">SDCM: 15.6</div>
<div class="t" style="left:739.80px;top:791.00px;font:bold 6.2px/0 'Liberation Sans',sans-serif;color:#0a0a18;">x=0.319 y=0.347 6100K/YANKON</div>
<div style="left:0.00px;top:806.00px;width:851.00px;height:12.50px;background:#f0f0f0;border-top:1px solid #dadada;box-sizing:border-box;"></div>
<div class="t" style="left:1.50px;top:812.50px;font:6px/0 'Liberation Sans',sans-serif;color:#222;">Ready</div>
<div class="t" style="left:421.00px;top:812.50px;font:6px/0 'Liberation Sans',sans-serif;color:#222;">Listening</div>
<div style="left:0.00px;top:818.50px;width:851.00px;height:1.80px;background:#1a1a1a;"></div>
<div style="left:0.00px;top:820.30px;width:851.00px;height:31.00px;background:#ffffff;"></div>
<div style="left:750.50px;top:808.00px;width:12.00px;height:9.50px;background:#f6f6f6;border:1px solid #dcdcdc;box-sizing:border-box;"></div>
<div class="t" style="left:751.50px;top:813.00px;font:6px/0 'Liberation Sans',sans-serif;color:#444;transform:scaleX(0.85);transform-origin:0 0;">CAP</div>
<div style="left:763.50px;top:808.00px;width:12.00px;height:9.50px;background:#f6f6f6;border:1px solid #dcdcdc;box-sizing:border-box;"></div>
<div class="t" style="left:764.50px;top:813.00px;font:6px/0 'Liberation Sans',sans-serif;color:#444;transform:scaleX(0.85);transform-origin:0 0;">NUM</div>
<div class="t" style="left:780.60px;top:813.00px;font:bold 5px/0 'Liberation Sans',sans-serif;color:#555;">CK</div>
<div style="left:789.80px;top:808.20px;width:8.00px;height:9.00px;border:0.8px solid #aaa;background:#e8e8e8;box-sizing:border-box;"></div>
<div class="t" style="left:791.00px;top:813.00px;font:6.5px/0 'Liberation Sans',sans-serif;color:#333;">M</div>
<div class="t" style="left:799.40px;top:813.00px;font:bold 7.5px/0 'Liberation Sans',sans-serif;color:#333;">中</div>
<div class="t" style="left:809.70px;top:813.00px;font:bold 7px/0 'Liberation Sans',sans-serif;color:#333;">♪</div>
<div class="t" style="left:818.00px;top:813.00px;font:bold 7px/0 'Liberation Sans',sans-serif;color:#333;">°,</div>
<div class="t" style="left:826.80px;top:813.00px;font:bold 7.5px/0 'Liberation Sans',sans-serif;color:#333;">简</div>
<div class="t" style="left:835.30px;top:813.00px;font:bold 7px/0 'Liberation Sans',sans-serif;color:#333;">⊕</div>
<div class="t" style="left:846.50px;top:813.00px;font:bold 7px/0 'Liberation Sans',sans-serif;color:#333;">:</div></body></html>
